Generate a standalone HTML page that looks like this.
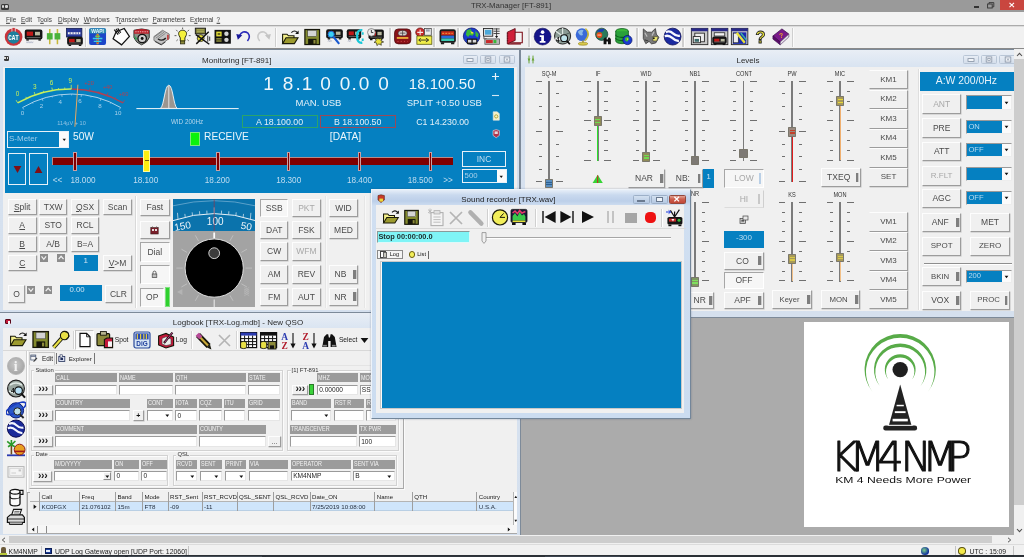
<!DOCTYPE html><html lang="en"><head><meta charset="utf-8"><title>TRX-Manager [FT-891]</title><style>
*{box-sizing:border-box;margin:0;padding:0}
html,body{width:1024px;height:557px;overflow:hidden;background:#ababab}
body{filter:blur(0.5px);position:relative;font-family:"Liberation Sans",sans-serif;font-size:8px;color:#333;line-height:1}
div,svg,i,span.a{position:absolute}
.t{white-space:nowrap;line-height:1}
.b{background:#f0f0f0;border:1px solid;border-color:#fdfdfd #9c9c9c #9c9c9c #fdfdfd;box-shadow:0.6px 0.6px 0 #c9c9c9;display:flex;align-items:center;justify-content:center;white-space:nowrap}
.b.d{background:#f6f6f6;border-color:#a6a6a6 #fff #fff #a6a6a6;box-shadow:none}
.bl{line-height:1}
.ind{position:absolute;right:1.5px;top:50%;width:2.6px;height:9px;margin-top:-4.5px;background:#7e7e7e;box-shadow:0.8px 0 0 #c4c4c4}
.win{background:linear-gradient(#e9eef5 0,#dfe8f3 10px,#d7e2f0 19px,#d5e0ee 100%);border:1px solid #7d8a99}
.wt{white-space:nowrap;color:#2b2b2b;font-size:8px;transform:translate(-50%,-50%)}
.cb{border:1px solid #b9c6d6;background:linear-gradient(#e7edf5,#d4deeb);border-radius:1.5px}
.lab{background:#9b9b9b;color:#f2f2f2;font-size:6.8px;white-space:nowrap;overflow:hidden;padding:1.3px 0 0 1px}
.lab span{display:inline-block;transform:scaleX(0.8);transform-origin:0 50%}
.inp{background:#fff;border:1px solid;border-color:#9a9a9a #e6e6e6 #e6e6e6 #9a9a9a;font-size:6.6px;color:#222;white-space:nowrap;overflow:hidden;padding:1.4px 0 0 1.2px}
.grp{border:1px solid #d2d2d2;box-shadow:0.7px 0.7px 0 #fff, inset 0.7px 0.7px 0 #fff}
.gl{background:#f0f0f0;font-size:5.9px;color:#333;padding:0 1px;white-space:nowrap;transform:translate(0,-50%)}
.blue{background:#0580c1}
.u{text-decoration:underline}
</style></head><body>
<div style="left:0px;top:0px;width:1024px;height:11.8px;background:#9a9a9a"></div>
<div style="left:1px;top:3.5px;width:8px;height:6px;background:#3a3a3a;border-radius:1.5px"></div>
<div style="left:2.2px;top:5px;width:2.2px;height:3px;background:#d8d8d8;border-radius:1px"></div>
<div style="left:5.4px;top:5px;width:2.2px;height:3px;background:#d8d8d8;border-radius:1px"></div>
<div class="t" style="left:511px;top:6.2px;font-size:7.8px;color:#333;transform:translate(-50%,-50%);">TRX-Manager [FT-891]</div>
<div style="left:974px;top:6.4px;width:4.6px;height:1.2px;background:#333"></div>
<svg style="left:987px;top:1.6px;" width="8" height="7" viewBox="0 0 8 7"><rect x="0.6" y="2" width="4.6" height="4" fill="none" stroke="#333" stroke-width="0.9"/><path d="M2 2V0.6H6.8V4.8H5.4" fill="none" stroke="#333" stroke-width="0.9"/></svg>
<div style="left:1000.4px;top:0px;width:23.6px;height:9.6px;background:#c9463f"></div>
<svg style="left:1008.4px;top:1.8px;" width="8" height="6" viewBox="0 0 8 6"><path d="M1.5 0.8L6 5.2M6 0.8L1.5 5.2" stroke="#fff" stroke-width="1.1" fill="none"/></svg>
<div style="left:0px;top:11.8px;width:1024px;height:13.7px;background:#f3f3f3"></div>
<div class="t" style="left:6px;top:19.7px;font-size:6.4px;color:#3a3a3a;transform:translate(0,-50%);"><span class=u>F</span>ile</div>
<div class="t" style="left:21px;top:19.7px;font-size:6.4px;color:#3a3a3a;transform:translate(0,-50%);"><span class=u>E</span>dit</div>
<div class="t" style="left:37px;top:19.7px;font-size:6.4px;color:#3a3a3a;transform:translate(0,-50%);">T<span class=u>o</span>ols</div>
<div class="t" style="left:58px;top:19.7px;font-size:6.4px;color:#3a3a3a;transform:translate(0,-50%);"><span class=u>D</span>isplay</div>
<div class="t" style="left:83.7px;top:19.7px;font-size:6.4px;color:#3a3a3a;transform:translate(0,-50%);"><span class=u>W</span>indows</div>
<div class="t" style="left:115.3px;top:19.7px;font-size:6.4px;color:#3a3a3a;transform:translate(0,-50%);">T<span class=u>r</span>ansceiver</div>
<div class="t" style="left:152.5px;top:19.7px;font-size:6.4px;color:#3a3a3a;transform:translate(0,-50%);"><span class=u>P</span>arameters</div>
<div class="t" style="left:190px;top:19.7px;font-size:6.4px;color:#3a3a3a;transform:translate(0,-50%);">E<span class=u>x</span>ternal</div>
<div class="t" style="left:216.6px;top:19.7px;font-size:6.4px;color:#3a3a3a;transform:translate(0,-50%);"><span class=u>?</span></div>
<div style="left:0px;top:25.5px;width:1024px;height:22.8px;background:#f1f1f1;border-top:0.6px solid #dcdcdc"></div>
<div style="left:0px;top:48px;width:1024px;height:1.4px;background:#8a8a8a"></div>
<div style="left:84.8px;top:28px;width:1.4px;height:18.5px;background:#cfcfcf;box-shadow:1px 0 0 #fbfbfb"></div>
<div style="left:275px;top:28px;width:1.4px;height:18.5px;background:#cfcfcf;box-shadow:1px 0 0 #fbfbfb"></div>
<div style="left:389.3px;top:28px;width:1.4px;height:18.5px;background:#cfcfcf;box-shadow:1px 0 0 #fbfbfb"></div>
<div style="left:433.3px;top:28px;width:1.4px;height:18.5px;background:#cfcfcf;box-shadow:1px 0 0 #fbfbfb"></div>
<div style="left:457.3px;top:28px;width:1.4px;height:18.5px;background:#cfcfcf;box-shadow:1px 0 0 #fbfbfb"></div>
<div style="left:528.3px;top:28px;width:1.4px;height:18.5px;background:#cfcfcf;box-shadow:1px 0 0 #fbfbfb"></div>
<div style="left:636.3px;top:28px;width:1.4px;height:18.5px;background:#cfcfcf;box-shadow:1px 0 0 #fbfbfb"></div>
<div style="left:682.3px;top:28px;width:1.4px;height:18.5px;background:#cfcfcf;box-shadow:1px 0 0 #fbfbfb"></div>
<div style="left:791.8px;top:28px;width:1.4px;height:18.5px;background:#cfcfcf;box-shadow:1px 0 0 #fbfbfb"></div>
<svg style="left:3.7px;top:27.4px;" width="19.2" height="19.2" viewBox="0 0 20 20"><circle cx="10" cy="10.4" r="9.2" fill="#c8343a"/><rect x="8.3" y="0.6" width="3.4" height="5.4" fill="#c8343a" stroke="#f1f1f1" stroke-width="0.8"/><circle cx="10" cy="10.9" r="6.5" fill="#1c7f9c"/><text x="10" y="13.6" font-size="6.6" font-weight="bold" fill="#fff" text-anchor="middle" font-family="Liberation Mono,monospace" textLength="11" lengthAdjust="spacingAndGlyphs">CAT</text></svg>
<svg style="left:24.2px;top:27.4px;" width="19.2" height="19.2" viewBox="0 0 20 20"><rect x="0.8" y="2.6" width="18.4" height="10.4" rx="2" fill="#141414"/><rect x="2.8" y="4.8" width="6.62" height="4.37" fill="#c01818"/><rect x="11.47" y="5" width="5.15" height="3.74" fill="#b9b9a0"/><path d="M2.8 11H17.2" stroke="#777" stroke-width="0.8"/><rect x="2.4" y="12.8" width="2.6" height="1.4" fill="#141414"/><rect x="15" y="12.8" width="2.6" height="1.4" fill="#141414"/><path d="M2.4 16.8l0.8 -1.6l0.8 1.6l0.8 -1.6l0.8 1.6l0.8 -1.6l0.8 1.6l0.8 -1.6l0.8 1.6l0.8 -1.6" fill="none" stroke="#9aa0b8" stroke-width="0.5"/></svg>
<svg style="left:44.4px;top:27.4px;" width="19.2" height="19.2" viewBox="0 0 20 20"><path d="M6 2V18M14 2V18" stroke="#c8b83a" stroke-width="1.6"/><rect x="3" y="6.4" width="6" height="6.6" fill="#4ab23a"/><rect x="11" y="6.4" width="6" height="6.6" fill="#4ab23a"/></svg>
<svg style="left:64.6px;top:27.4px;" width="19.2" height="19.2" viewBox="0 0 20 20"><rect x="1.6" y="1.4" width="16" height="9" fill="#2a3a9a" stroke="#10184a" stroke-width="0.8"/><rect x="3" y="5.4" width="13" height="2.2" fill="#f1f1f1"/><path d="M5.4 5.4V7.6M8.4 5.4V7.6M11.4 5.4V7.6M14 5.4V7.6" stroke="#2a3a9a" stroke-width="0.8"/><rect x="2.2" y="10.2" width="16.4" height="8.4" rx="2" fill="#141414"/><rect x="4.2" y="12.4" width="5.9" height="3.53" fill="#c01818"/><rect x="11.71" y="12.6" width="4.59" height="3.02" fill="#b9b9a0"/><path d="M4.2 16.6H16.6" stroke="#777" stroke-width="0.8"/><rect x="3.8" y="18.4" width="2.6" height="1.4" fill="#141414"/><rect x="14.4" y="18.4" width="2.6" height="1.4" fill="#141414"/></svg>
<svg style="left:88.2px;top:27.4px;" width="19.2" height="19.2" viewBox="0 0 20 20"><rect x="1.2" y="1.2" width="17.6" height="17.6" rx="2" fill="#1c46c8"/><rect x="1.2" y="1.2" width="17.6" height="5.6" rx="2" fill="#2a8ab0"/><text x="10" y="6.4" font-size="5.2" font-weight="bold" fill="#eaf6ff" text-anchor="middle" font-family="Liberation Sans,sans-serif">WAPI</text><path d="M10 7V18" stroke="#e8a020" stroke-width="2.2"/><path d="M10 8V17" stroke="#d03020" stroke-width="0.9"/><path d="M5 12H15M6 15H14" stroke="#3ad0e0" stroke-width="1.4"/><path d="M7.4 9.6H12.6" stroke="#6ae04a" stroke-width="1.2"/></svg>
<svg style="left:111.4px;top:27.4px;" width="19.2" height="19.2" viewBox="0 0 20 20"><path d="M5.4 5L13.8 1.6L19.2 9.8L11 18.6L2.2 12.2Z" fill="#fdfdfd" stroke="#111" stroke-width="1.3"/><path d="M3.4 2.8L7.4 8M5.2 2L8.8 7M7 1.4L10.2 6" stroke="#111" stroke-width="1.2"/></svg>
<svg style="left:132px;top:27.4px;" width="19.2" height="19.2" viewBox="0 0 20 20"><path d="M2 3.4Q10 0.6 18 3.4V11Q16 16.6 10 18.6Q4 16.6 2 11Z" fill="#8a9088" stroke="#222" stroke-width="0.9"/><path d="M2.2 3.6Q10 0.8 17.8 3.6V7H2.2Z" fill="#b8202a"/><path d="M3.4 5H16.6" stroke="#f4d0d0" stroke-width="0.9" stroke-dasharray="1.4 1"/><path d="M2.4 8.6L6 12.6L3.4 13.6Z" fill="#3aa05a"/><circle cx="10.6" cy="12" r="4.4" fill="#cfcfcf" stroke="#111" stroke-width="1.3"/><circle cx="10.6" cy="12" r="1.5" fill="#111"/></svg>
<svg style="left:152.4px;top:27.4px;" width="19.2" height="19.2" viewBox="0 0 20 20"><path d="M2 10L11 3.4L18 7.4V12L9.6 18L2 14Z" fill="#c4c4c4" stroke="#555" stroke-width="0.7"/><path d="M2.4 10.4L11 4.4M4 11.6L12.6 5.4M5.6 12.6L14 6.6" stroke="#777" stroke-width="0.8"/><path d="M6.4 12.4Q10 15.4 14.4 11.6" fill="none" stroke="#222" stroke-width="1.4"/><path d="M16.6 8V13.4" stroke="#c03030" stroke-width="1.6"/><path d="M3 15L9.6 18.6L14 15.6" fill="none" stroke="#333" stroke-width="1"/></svg>
<svg style="left:173.1px;top:27.4px;" width="19.2" height="19.2" viewBox="0 0 20 20"><path d="M10 3.4C13.6 3.4 15 6.4 13.6 9L12.4 11.4V14.6H7.6V11.4L6.4 9C5 6.4 6.4 3.4 10 3.4Z" fill="#f4f03a" stroke="#2a2a10" stroke-width="1"/><rect x="7.8" y="14.6" width="4.4" height="3" fill="#8c8a3a" stroke="#2a2a10" stroke-width="0.8"/><path d="M10 0.6V2.2M3.4 3L4.8 4.6M16.6 3L15.2 4.6M1.6 9H3.6M16.4 9H18.4M3.6 14.4L5 13.2M16.4 14.4L15 13.2" stroke="#333" stroke-width="0.8"/></svg>
<svg style="left:192.9px;top:27.4px;" width="19.2" height="19.2" viewBox="0 0 20 20"><rect x="2.4" y="1.2" width="10.6" height="6" fill="#7a7a3a" stroke="#111" stroke-width="0.9"/><path d="M4 3H11.4M4 5H11.4" stroke="#d8d870" stroke-width="0.7"/><circle cx="8" cy="11.6" r="3.6" fill="#e8e03a" stroke="#222" stroke-width="0.8"/><path d="M3 8L17 18M3.4 17.6L16.4 5" stroke="#111" stroke-width="1.5"/><path d="M15.4 9V15.4M17.4 10V14.4" stroke="#111" stroke-width="0.9"/></svg>
<svg style="left:213.4px;top:27.4px;" width="19.2" height="19.2" viewBox="0 0 20 20"><rect x="1.6" y="3" width="17" height="14.4" fill="#111"/><rect x="3.4" y="4.8" width="5.6" height="5" fill="#e8e03a"/><rect x="4.8" y="6.2" width="2.8" height="2.2" fill="#6a6a1a"/><path d="M3.4 12.4H9M3.4 14.6H9" stroke="#d8d850" stroke-width="1"/><circle cx="14" cy="7" r="2.3" fill="#d4d4d4"/><circle cx="14" cy="13.4" r="2.3" fill="#d4d4d4"/></svg>
<svg style="left:233.9px;top:27.4px;" width="19.2" height="19.2" viewBox="0 0 20 20"><path d="M5.4 9.6Q9 2.6 14.6 6.4Q17.6 10 14 14.6" fill="none" stroke="#2a2ab8" stroke-width="1.6"/><path d="M2.4 7.4L8.6 8.6L4 13.4Z" fill="#1a1a9a"/></svg>
<svg style="left:253.8px;top:27.4px;" width="19.2" height="19.2" viewBox="0 0 20 20"><path d="M14.6 9.6Q11 2.6 5.4 6.4Q2.4 10 6 14.6" fill="none" stroke="#c9c9c9" stroke-width="1.6"/><path d="M17.6 7.4L11.4 8.6L16 13.4Z" fill="#c4c4c4"/></svg>
<svg style="left:281px;top:27.6px;" width="19" height="19" viewBox="0 0 19 19"><path d="M1.6 15.6V6.2H6L7.4 7.8H13V10" fill="#f2ee8a" stroke="#1a1a0a" stroke-width="1.1"/><path d="M1.6 15.6L5 9.8H17L13.4 15.6Z" fill="#9c9a2e" stroke="#1a1a0a" stroke-width="1.1"/><path d="M10.4 4.6Q13.6 1.4 16.4 4.6" fill="none" stroke="#111" stroke-width="1.1"/><path d="M17.6 2.6V6H14.2Z" fill="#111"/></svg>
<svg style="left:302.7px;top:28.4px;" width="18.05" height="18.05" viewBox="0 0 19 19"><rect x="2" y="1.6" width="15.4" height="15.8" fill="#838a2e" stroke="#16160a" stroke-width="1.3"/><rect x="5" y="2.4" width="9.4" height="6.4" fill="#d4d4d4" stroke="#333" stroke-width="0.5"/><rect x="5.4" y="11.4" width="8.8" height="6" fill="#16160a"/><rect x="11" y="12.6" width="2.2" height="3.8" fill="#8c8a3a"/></svg>
<svg style="left:325.4px;top:27.4px;" width="19.2" height="19.2" viewBox="0 0 20 20"><rect x="1.2" y="2.4" width="17.4" height="9.4" rx="2" fill="#141414"/><rect x="3.2" y="4.6" width="6.26" height="3.95" fill="#c01818"/><rect x="11.29" y="4.8" width="4.87" height="3.38" fill="#b9b9a0"/><path d="M3.2 9.8H16.6" stroke="#777" stroke-width="0.8"/><rect x="2.8" y="11.6" width="2.6" height="1.4" fill="#141414"/><rect x="14.4" y="11.6" width="2.6" height="1.4" fill="#141414"/><path d="M3 15.4l0.8 -1.6l0.8 1.6l0.8 -1.6l0.8 1.6l0.8 -1.6" fill="none" stroke="#9aa0b8" stroke-width="0.5"/><circle cx="6.4" cy="7.6" r="3.2" fill="#3ad0f4" stroke="#1a6ad0" stroke-width="1"/><path d="M8.8 10.2L14.8 17.6" stroke="#1a5ad0" stroke-width="2.2"/></svg>
<svg style="left:345.9px;top:27.4px;" width="19.2" height="19.2" viewBox="0 0 20 20"><rect x="0.8" y="2.4" width="15" height="9.4" rx="2" fill="#141414"/><rect x="2.8" y="4.6" width="5.4" height="3.95" fill="#c01818"/><rect x="9.5" y="4.8" width="4.2" height="3.38" fill="#b9b9a0"/><path d="M2.8 9.8H13.8" stroke="#777" stroke-width="0.8"/><rect x="2.4" y="11.6" width="2.6" height="1.4" fill="#141414"/><rect x="11.6" y="11.6" width="2.6" height="1.4" fill="#141414"/><path d="M2 15.4l0.8 -1.6l0.8 1.6l0.8 -1.6l0.8 1.6" fill="none" stroke="#9aa0b8" stroke-width="0.5"/><path d="M17 3.4Q11.4 2.6 11.6 9.4Q11.4 17 17 16.4" fill="none" stroke="#18c8d8" stroke-width="2.4"/><path d="M17.4 5.6V8M17.4 12V14.6" stroke="#18c8d8" stroke-width="2"/></svg>
<svg style="left:366.4px;top:27.4px;" width="19.2" height="19.2" viewBox="0 0 20 20"><rect x="2.6" y="2.6" width="16" height="10" rx="2" fill="#141414"/><rect x="4.6" y="4.8" width="5.76" height="4.2" fill="#c01818"/><rect x="11.88" y="5" width="4.48" height="3.6" fill="#b9b9a0"/><path d="M4.6 10.6H16.6" stroke="#777" stroke-width="0.8"/><rect x="4.2" y="12.4" width="2.6" height="1.4" fill="#141414"/><rect x="14.4" y="12.4" width="2.6" height="1.4" fill="#141414"/><circle cx="5.6" cy="5.6" r="4" fill="#ececec" stroke="#777" stroke-width="0.8"/><path d="M5.6 3V5.8H7.6" fill="none" stroke="#222" stroke-width="0.9"/><path d="M12 10L13.4 12.6L16.4 11.4L15.6 14.4L18.4 15.6L15.6 16.6L16 19L13.4 17.6L11.4 19.4L11 16.6L8.4 16L10.6 14.4L9.4 11.8L11.8 12.6Z" fill="#e8e03a" stroke="#222" stroke-width="0.7"/></svg>
<svg style="left:393.4px;top:27.4px;" width="19.2" height="19.2" viewBox="0 0 20 20"><rect x="1.6" y="2" width="17" height="15.6" rx="4" fill="#8a1218" stroke="#4a080c" stroke-width="0.8"/><ellipse cx="10" cy="6.4" rx="4.6" ry="2.8" fill="#d8d0d0" stroke="#333" stroke-width="0.6"/><path d="M10 3.6V9.2M7 6.4H13" stroke="#333" stroke-width="0.7"/><rect x="4" y="10.4" width="12" height="2" fill="#e8a838"/><path d="M4.6 15H15.4" stroke="#c84a4a" stroke-width="1" stroke-dasharray="1.2 2.2"/></svg>
<svg style="left:413.9px;top:27.4px;" width="19.2" height="19.2" viewBox="0 0 20 20"><circle cx="6.4" cy="5.6" r="4.6" fill="#c82a2a" stroke="#5a0a0a" stroke-width="0.7"/><path d="M3.4 5.6H9.4M6.4 2.6V8.6" stroke="#f4e8e8" stroke-width="1.1"/><rect x="11" y="1.6" width="7" height="7" fill="#ececec" stroke="#444" stroke-width="0.8"/><rect x="12.4" y="2.4" width="4" height="2.4" fill="#9aa0b0"/><rect x="3" y="9.4" width="15.6" height="8.6" fill="#f0ee4a" stroke="#55550a" stroke-width="0.8"/><path d="M5 13.6H14.6M12.4 11.6L15.4 13.6L12.4 15.6M7 11.6L5 13.6L7 15.6" fill="none" stroke="#222" stroke-width="0.9"/></svg>
<svg style="left:437.6px;top:27.4px;" width="19.2" height="19.2" viewBox="0 0 20 20"><rect x="1.6" y="2.4" width="17" height="14" rx="2.4" fill="#1c1c1c"/><rect x="3.4" y="4.4" width="13.4" height="4.4" fill="#c82a1a"/><path d="M4.4 6.6H15.4" stroke="#f0a040" stroke-width="1" stroke-dasharray="2 1.2"/><rect x="3.4" y="9" width="13.4" height="3" fill="#2a6ad8"/><rect x="3.4" y="12" width="13.4" height="2.6" fill="#3ac8b0"/><rect x="3" y="16" width="3.4" height="2" fill="#1c1c1c"/><rect x="13.6" y="16" width="3.4" height="2" fill="#1c1c1c"/></svg>
<svg style="left:461.8px;top:27.4px;" width="19.2" height="19.2" viewBox="0 0 20 20"><circle cx="10" cy="9.6" r="8.6" fill="#1a3ad0" stroke="#0a1460" stroke-width="0.8"/><path d="M5 3.4L9 2L10.4 5L13 6.4L11 9L8 8.4L6.4 10.4L4 8Z" fill="#3ab83a"/><path d="M8.6 4.4L12 5.6L10.4 7.6Z" fill="#e8e03a"/><path d="M14 4L17.4 7.4L16.4 11L14 9Z" fill="#3ab83a"/><rect x="5" y="12" width="11" height="6" rx="1" fill="#1a1a1a"/><rect x="6.2" y="13.4" width="3.6" height="2.8" fill="#d8d8d8"/><rect x="11.2" y="13.4" width="3.6" height="2.8" fill="#d8d8d8"/></svg>
<svg style="left:481.6px;top:27.4px;" width="19.2" height="19.2" viewBox="0 0 20 20"><rect x="1.6" y="1.6" width="9.6" height="8" fill="#e4e4e4" stroke="#222" stroke-width="0.9"/><rect x="3" y="3" width="6.8" height="5" fill="#4aa8d8"/><path d="M12 2H18.4M12 4.4H18.4M12 6.8H18.4M15.2 1.4V10.4" stroke="#333" stroke-width="0.9"/><path d="M13.6 9.4H16.8L15.2 11.6Z" fill="#111"/><path d="M2 10.4V12.4H5" fill="none" stroke="#333" stroke-width="0.8"/><rect x="3" y="12.4" width="15.4" height="5.6" fill="#b8b8b8" stroke="#444" stroke-width="0.7"/><rect x="4.2" y="13.6" width="7" height="3.2" fill="#c82a2a"/><rect x="12" y="13.6" width="3" height="3.2" fill="#3ab83a"/></svg>
<svg style="left:504.9px;top:27.4px;" width="19.2" height="19.2" viewBox="0 0 20 20"><path d="M9 5.4H18V16.4H6.4" fill="#f4f4f4" stroke="#7a0a14" stroke-width="1.1"/><path d="M2.4 5.4L10.6 1.6V14L2.4 17.6Z" fill="#d0203a" stroke="#5a0a14" stroke-width="0.9"/><path d="M2 7H3.4M2 9.4H3.4M2 11.8H3.4M2 14.2H3.4" stroke="#5a0a14" stroke-width="0.8"/><path d="M3 17.6H16.6" stroke="#7a0a14" stroke-width="1.4"/></svg>
<svg style="left:533px;top:27.4px;" width="19.2" height="19.2" viewBox="0 0 20 20"><circle cx="10" cy="10" r="8.8" fill="#14148a" stroke="#0a0a50" stroke-width="0.6"/><circle cx="10" cy="5.4" r="1.9" fill="#fff"/><path d="M7 8.6H11.4V14.6H13V16.4H7V14.6H8.6V10.4H7Z" fill="#fff"/></svg>
<svg style="left:553.2px;top:27.4px;" width="19.2" height="19.2" viewBox="0 0 20 20"><circle cx="10" cy="9.4" r="8.4" fill="#8a9a94" stroke="#222" stroke-width="1"/><path d="M10 1V9.4L3 4.4" fill="none" stroke="#dfe8e4" stroke-width="1.2"/><path d="M10 9.4L17.4 6" stroke="#4a5a54" stroke-width="1"/><path d="M2.4 12.6H8" stroke="#f4f4f4" stroke-width="3"/><text x="3" y="15.4" font-size="6.6" font-weight="bold" fill="#111" font-family="Liberation Sans,sans-serif">4</text><circle cx="11.6" cy="11.6" r="3.6" fill="#bfe4ec" stroke="#111" stroke-width="1.1"/><path d="M14.4 14.4L17.6 18" stroke="#111" stroke-width="1.8"/></svg>
<svg style="left:573.1px;top:27.4px;" width="19.2" height="19.2" viewBox="0 0 20 20"><circle cx="9.4" cy="8" r="6.6" fill="#3a6ad8"/><path d="M5 5Q8 2 11 3.4Q9 6 10.4 8.4Q7 10 5 5Z" fill="#8ab8e8"/><path d="M13 1.6Q19 7 12.4 14.4" fill="none" stroke="#c8b83a" stroke-width="1.6"/><path d="M10.4 14V16.6" stroke="#a8983a" stroke-width="1.6"/><ellipse cx="10.4" cy="17.4" rx="5" ry="1.6" fill="#d8c84a" stroke="#8a7a1a" stroke-width="0.6"/></svg>
<svg style="left:594.3px;top:27.4px;" width="19.2" height="19.2" viewBox="0 0 20 20"><circle cx="8" cy="7.6" r="6.4" fill="#2a7a5a" stroke="#133" stroke-width="0.7"/><path d="M3 4.4Q6.4 1 11 2.4L9 5H4.4Z" fill="#1a3ab8"/><circle cx="5.6" cy="8.4" r="3" fill="#e84a1a"/><path d="M3.6 8.4H7.6" stroke="#f4c8a8" stroke-width="1.1"/><path d="M10 18V12.4L11.4 11H12.6L13.4 13H14.2L15 11H16.2L17.6 12.4V18H14.6V15H13V18Z" fill="#111"/></svg>
<svg style="left:614.1px;top:27.4px;" width="19.2" height="19.2" viewBox="0 0 20 20"><ellipse cx="8.4" cy="4.4" rx="6.6" ry="2.8" fill="#3ab83a" stroke="#0a5a1a" stroke-width="0.8"/><path d="M1.8 4.4V14.6A6.6 2.8 0 0 0 15 14.6V4.4" fill="#2aa03a" stroke="#0a5a1a" stroke-width="0.8"/><path d="M1.8 8A6.6 2.8 0 0 0 15 8M1.8 11.4A6.6 2.8 0 0 0 15 11.4" fill="none" stroke="#0a5a1a" stroke-width="1.2"/><circle cx="14" cy="13.6" r="4.8" fill="#1a3ad0" stroke="#0a1460" stroke-width="0.7"/><path d="M11.4 11.4L14.4 10L16 12.4L13.6 15.4L11.6 14Z" fill="#3ab83a"/><path d="M13.4 11.4L15 12.4L13.6 14Z" fill="#e8e03a"/></svg>
<svg style="left:641.4px;top:27.4px;" width="19.2" height="19.2" viewBox="0 0 20 20"><path d="M2.4 2L6.4 5.4H11L15 1.6L16 7.4L18.6 11L15.4 16.6L11 17.6L8.4 15L5 17.4L2.4 12Z" fill="#7a7a7a" stroke="#333" stroke-width="0.8"/><path d="M4 6L6.4 10M13.6 5L11.4 9" stroke="#bdbdbd" stroke-width="1.2"/><path d="M12.4 10H18L16.4 14.6H12.4Z" fill="#e8e470" stroke="#333" stroke-width="0.6"/><circle cx="13.4" cy="11.6" r="0.9" fill="#111"/><path d="M4 13.4L7.6 14.6" stroke="#333" stroke-width="1"/></svg>
<svg style="left:662.7px;top:27.4px;" width="19.2" height="19.2" viewBox="0 0 20 20"><circle cx="10" cy="10" r="8.8" fill="#1a2aa0" stroke="#0a0a50" stroke-width="0.8"/><path d="M3 5.4Q7 3.4 10.4 6.6T17.6 9M1.8 9.6Q6 8 9.6 11.4T16.6 14.6" stroke="#f6f8ff" stroke-width="2.4" fill="none"/></svg>
<svg style="left:690.1px;top:27.4px;" width="19.2" height="19.2" viewBox="0 0 20 20"><rect x="1.4" y="1.4" width="17.2" height="17" fill="#c9c9c9" stroke="#222" stroke-width="0.9"/><rect x="1.4" y="1.4" width="17.2" height="3" fill="#2a2a8a"/><rect x="5" y="6.4" width="10" height="9" fill="#ececec" stroke="#222" stroke-width="0.9"/><rect x="3.4" y="10" width="7.6" height="6.4" fill="#f4f4f4" stroke="#222" stroke-width="0.9"/><rect x="4.8" y="12.4" width="4.6" height="3" fill="#3a6a6a"/></svg>
<svg style="left:709.9px;top:27.4px;" width="19.2" height="19.2" viewBox="0 0 20 20"><rect x="1.4" y="1.4" width="17.2" height="17" fill="#c9c9c9" stroke="#222" stroke-width="0.9"/><rect x="1.4" y="1.4" width="17.2" height="3" fill="#2a2a8a"/><rect x="4.4" y="6" width="11" height="3.4" fill="#f4f4f4" stroke="#222" stroke-width="0.8"/><rect x="2.4" y="10" width="15" height="7.6" rx="2" fill="#141414"/><rect x="4.4" y="12.2" width="5.4" height="3.19" fill="#c01818"/><rect x="11.1" y="12.4" width="4.2" height="2.74" fill="#b9b9a0"/><path d="M4.4 15.6H15.4" stroke="#777" stroke-width="0.8"/><rect x="4" y="17.4" width="2.6" height="1.4" fill="#141414"/><rect x="13.2" y="17.4" width="2.6" height="1.4" fill="#141414"/></svg>
<svg style="left:730.4px;top:27.4px;" width="19.2" height="19.2" viewBox="0 0 20 20"><rect x="1.4" y="1.4" width="17.2" height="17" fill="#c9c9c9" stroke="#222" stroke-width="0.9"/><rect x="1.4" y="1.4" width="17.2" height="3" fill="#2a2a8a"/><rect x="3" y="5.6" width="14" height="12" fill="#1a2ab0"/><rect x="3.6" y="6.4" width="5" height="10" fill="#ececec" stroke="#222" stroke-width="0.6"/><path d="M7 6L15.4 16.4" stroke="#e8e03a" stroke-width="2.4"/><path d="M11.4 6.4L17 13.4" stroke="#3ab8a0" stroke-width="1.6"/></svg>
<svg style="left:750.9px;top:27.4px;" width="19.2" height="19.2" viewBox="0 0 20 20"><text x="10" y="17" font-size="17" font-weight="bold" fill="#e8e03a" stroke="#222" stroke-width="0.9" text-anchor="middle" font-family="Liberation Sans,sans-serif">?</text></svg>
<svg style="left:771.4px;top:27.4px;" width="19.2" height="19.2" viewBox="0 0 20 20"><path d="M2 9.4L11.4 2L18.6 7.4L9.6 15.6Z" fill="#7a1a8a" stroke="#3a0a4a" stroke-width="0.8"/><path d="M2 9.4V12.6L9.6 18.6V15.6Z" fill="#5a0a6a" stroke="#3a0a4a" stroke-width="0.7"/><path d="M9.6 15.6L18.6 7.4V10.4L9.6 18.6Z" fill="#e8e4ec" stroke="#5a3a6a" stroke-width="0.7"/><text x="10.6" y="11.4" font-size="7" font-weight="bold" fill="#e8a030" text-anchor="middle" font-family="Liberation Sans,sans-serif" transform="rotate(-12 10.6 9)">?</text></svg>
<div class="win" style="left:520.4px;top:49.4px;width:509.6px;height:268.2px;"></div>
<svg style="left:526.5px;top:54.5px;" width="8" height="9" viewBox="0 0 8 9"><path d="M2 0.6V8.4M6 0.6V8.4" stroke="#6aa336" stroke-width="1"/><path d="M0.6 3.6H3.4L2 6.6ZM4.6 5.4H7.4L6 2.4Z" fill="#6aa336"/></svg>
<div class="wt" style="left:748px;top:60.5px">Levels</div>
<div class="cb" style="left:962.6px;top:54.6px;width:16.2px;height:9.6px;"></div>
<svg style="left:966.7px;top:56.4px;" width="8" height="6" viewBox="0 0 8 6"><rect x="1" y="2.6" width="6" height="2.8" fill="#f2f5f9" stroke="#8592a3" stroke-width="0.8"/></svg>
<div class="cb" style="left:981px;top:54.6px;width:16px;height:9.6px;"></div>
<svg style="left:985px;top:55.9px;" width="8" height="7" viewBox="0 0 8 7"><rect x="1.2" y="0.9" width="5.6" height="5.2" fill="#f2f5f9" stroke="#8592a3" stroke-width="0.8"/><rect x="2.8" y="2.6" width="2.4" height="2" fill="none" stroke="#8592a3" stroke-width="0.7"/></svg>
<div class="cb" style="left:999.4px;top:54.6px;width:16.6px;height:9.6px;"></div>
<svg style="left:1003.7px;top:55.9px;" width="8" height="7" viewBox="0 0 8 7"><rect x="1.2" y="0.9" width="5.6" height="5.2" fill="#f2f5f9" stroke="#8592a3" stroke-width="0.8"/><path d="M2.6 2.2L5.4 4.8M5.4 2.2L2.6 4.8" stroke="#8592a3" stroke-width="0.7"/></svg>
<div style="left:525.4px;top:66.8px;width:504.6px;height:243.8px;background:#f0f0f0"></div>
<div class="t" style="left:549px;top:73.7px;font-size:6.4px;color:#333;transform:translate(-50%,-50%);transform:translate(-50%,-50%) scaleX(0.88);">SQ-M</div>
<div style="left:548.1px;top:81.4px;width:1.8px;height:101.08px;background:#7b7b7b"></div>
<div style="left:535.6px;top:80.9px;width:6.4px;height:1px;background:#6f6f6f"></div>
<div style="left:555.6px;top:80.9px;width:7px;height:1px;background:#6f6f6f"></div>
<div style="left:538.8px;top:93.46px;width:3.2px;height:1px;background:#6f6f6f"></div>
<div style="left:555.6px;top:93.46px;width:3.2px;height:1px;background:#6f6f6f"></div>
<div style="left:538.8px;top:106.02px;width:3.2px;height:1px;background:#6f6f6f"></div>
<div style="left:555.6px;top:106.02px;width:3.2px;height:1px;background:#6f6f6f"></div>
<div style="left:538.8px;top:118.58px;width:3.2px;height:1px;background:#6f6f6f"></div>
<div style="left:555.6px;top:118.58px;width:3.2px;height:1px;background:#6f6f6f"></div>
<div style="left:535.6px;top:131.14px;width:6.4px;height:1px;background:#6f6f6f"></div>
<div style="left:555.6px;top:131.14px;width:7px;height:1px;background:#6f6f6f"></div>
<div style="left:538.8px;top:143.7px;width:3.2px;height:1px;background:#6f6f6f"></div>
<div style="left:555.6px;top:143.7px;width:3.2px;height:1px;background:#6f6f6f"></div>
<div style="left:538.8px;top:156.26px;width:3.2px;height:1px;background:#6f6f6f"></div>
<div style="left:555.6px;top:156.26px;width:3.2px;height:1px;background:#6f6f6f"></div>
<div style="left:538.8px;top:168.82px;width:3.2px;height:1px;background:#6f6f6f"></div>
<div style="left:555.6px;top:168.82px;width:3.2px;height:1px;background:#6f6f6f"></div>
<div style="left:535.6px;top:181.38px;width:6.4px;height:1px;background:#6f6f6f"></div>
<div style="left:555.6px;top:181.38px;width:7px;height:1px;background:#6f6f6f"></div>
<div style="left:544.8px;top:178.6px;width:8.4px;height:9.6px;background:#5a8fc0;border:1px solid #7a776c;border-radius:0.8px"></div>
<div style="left:546.4px;top:181.5px;width:5.2px;height:1.4px;background:#2b5f92"></div>
<div style="left:546.4px;top:183.9px;width:5.2px;height:1.4px;background:#2b5f92"></div>
<div class="t" style="left:597.8px;top:73.7px;font-size:6.4px;color:#333;transform:translate(-50%,-50%);transform:translate(-50%,-50%) scaleX(0.88);">IF</div>
<div style="left:596.9px;top:81.4px;width:1.8px;height:79.24px;background:#7b7b7b"></div>
<div style="left:597.1px;top:121px;width:1.4px;height:39.6px;background:#2be02b"></div>
<div style="left:584.4px;top:80.9px;width:6.4px;height:1px;background:#6f6f6f"></div>
<div style="left:604.4px;top:80.9px;width:7px;height:1px;background:#6f6f6f"></div>
<div style="left:587.6px;top:90.73px;width:3.2px;height:1px;background:#6f6f6f"></div>
<div style="left:604.4px;top:90.73px;width:3.2px;height:1px;background:#6f6f6f"></div>
<div style="left:587.6px;top:100.56px;width:3.2px;height:1px;background:#6f6f6f"></div>
<div style="left:604.4px;top:100.56px;width:3.2px;height:1px;background:#6f6f6f"></div>
<div style="left:587.6px;top:110.39px;width:3.2px;height:1px;background:#6f6f6f"></div>
<div style="left:604.4px;top:110.39px;width:3.2px;height:1px;background:#6f6f6f"></div>
<div style="left:584.4px;top:120.22px;width:6.4px;height:1px;background:#6f6f6f"></div>
<div style="left:604.4px;top:120.22px;width:7px;height:1px;background:#6f6f6f"></div>
<div style="left:587.6px;top:130.05px;width:3.2px;height:1px;background:#6f6f6f"></div>
<div style="left:604.4px;top:130.05px;width:3.2px;height:1px;background:#6f6f6f"></div>
<div style="left:587.6px;top:139.88px;width:3.2px;height:1px;background:#6f6f6f"></div>
<div style="left:604.4px;top:139.88px;width:3.2px;height:1px;background:#6f6f6f"></div>
<div style="left:587.6px;top:149.71px;width:3.2px;height:1px;background:#6f6f6f"></div>
<div style="left:604.4px;top:149.71px;width:3.2px;height:1px;background:#6f6f6f"></div>
<div style="left:584.4px;top:159.54px;width:6.4px;height:1px;background:#6f6f6f"></div>
<div style="left:604.4px;top:159.54px;width:7px;height:1px;background:#6f6f6f"></div>
<div style="left:593.6px;top:116.2px;width:8.4px;height:9.6px;background:#8f8a58;border:1px solid #7a776c;border-radius:0.8px"></div>
<div style="left:595.2px;top:119.1px;width:5.2px;height:1.4px;background:#6fdc4f"></div>
<div style="left:595.2px;top:121.5px;width:5.2px;height:1.4px;background:#6fdc4f"></div>
<div class="t" style="left:646.3px;top:73.7px;font-size:6.4px;color:#333;transform:translate(-50%,-50%);transform:translate(-50%,-50%) scaleX(0.88);">WID</div>
<div style="left:645.4px;top:81.4px;width:1.8px;height:79.24px;background:#7b7b7b"></div>
<div style="left:632.9px;top:80.9px;width:6.4px;height:1px;background:#6f6f6f"></div>
<div style="left:652.9px;top:80.9px;width:7px;height:1px;background:#6f6f6f"></div>
<div style="left:636.1px;top:90.73px;width:3.2px;height:1px;background:#6f6f6f"></div>
<div style="left:652.9px;top:90.73px;width:3.2px;height:1px;background:#6f6f6f"></div>
<div style="left:636.1px;top:100.56px;width:3.2px;height:1px;background:#6f6f6f"></div>
<div style="left:652.9px;top:100.56px;width:3.2px;height:1px;background:#6f6f6f"></div>
<div style="left:636.1px;top:110.39px;width:3.2px;height:1px;background:#6f6f6f"></div>
<div style="left:652.9px;top:110.39px;width:3.2px;height:1px;background:#6f6f6f"></div>
<div style="left:632.9px;top:120.22px;width:6.4px;height:1px;background:#6f6f6f"></div>
<div style="left:652.9px;top:120.22px;width:7px;height:1px;background:#6f6f6f"></div>
<div style="left:636.1px;top:130.05px;width:3.2px;height:1px;background:#6f6f6f"></div>
<div style="left:652.9px;top:130.05px;width:3.2px;height:1px;background:#6f6f6f"></div>
<div style="left:636.1px;top:139.88px;width:3.2px;height:1px;background:#6f6f6f"></div>
<div style="left:652.9px;top:139.88px;width:3.2px;height:1px;background:#6f6f6f"></div>
<div style="left:636.1px;top:149.71px;width:3.2px;height:1px;background:#6f6f6f"></div>
<div style="left:652.9px;top:149.71px;width:3.2px;height:1px;background:#6f6f6f"></div>
<div style="left:632.9px;top:159.54px;width:6.4px;height:1px;background:#6f6f6f"></div>
<div style="left:652.9px;top:159.54px;width:7px;height:1px;background:#6f6f6f"></div>
<div style="left:642.1px;top:152px;width:8.4px;height:9.6px;background:#8f8a58;border:1px solid #7a776c;border-radius:0.8px"></div>
<div style="left:643.7px;top:154.9px;width:5.2px;height:1.4px;background:#6fdc4f"></div>
<div style="left:643.7px;top:157.3px;width:5.2px;height:1.4px;background:#6fdc4f"></div>
<div class="t" style="left:695px;top:73.7px;font-size:6.4px;color:#333;transform:translate(-50%,-50%);transform:translate(-50%,-50%) scaleX(0.88);">NB1</div>
<div style="left:694.1px;top:81.4px;width:1.8px;height:79.24px;background:#7b7b7b"></div>
<div style="left:681.6px;top:80.9px;width:6.4px;height:1px;background:#6f6f6f"></div>
<div style="left:701.6px;top:80.9px;width:7px;height:1px;background:#6f6f6f"></div>
<div style="left:684.8px;top:90.73px;width:3.2px;height:1px;background:#6f6f6f"></div>
<div style="left:701.6px;top:90.73px;width:3.2px;height:1px;background:#6f6f6f"></div>
<div style="left:684.8px;top:100.56px;width:3.2px;height:1px;background:#6f6f6f"></div>
<div style="left:701.6px;top:100.56px;width:3.2px;height:1px;background:#6f6f6f"></div>
<div style="left:684.8px;top:110.39px;width:3.2px;height:1px;background:#6f6f6f"></div>
<div style="left:701.6px;top:110.39px;width:3.2px;height:1px;background:#6f6f6f"></div>
<div style="left:681.6px;top:120.22px;width:6.4px;height:1px;background:#6f6f6f"></div>
<div style="left:701.6px;top:120.22px;width:7px;height:1px;background:#6f6f6f"></div>
<div style="left:684.8px;top:130.05px;width:3.2px;height:1px;background:#6f6f6f"></div>
<div style="left:701.6px;top:130.05px;width:3.2px;height:1px;background:#6f6f6f"></div>
<div style="left:684.8px;top:139.88px;width:3.2px;height:1px;background:#6f6f6f"></div>
<div style="left:701.6px;top:139.88px;width:3.2px;height:1px;background:#6f6f6f"></div>
<div style="left:684.8px;top:149.71px;width:3.2px;height:1px;background:#6f6f6f"></div>
<div style="left:701.6px;top:149.71px;width:3.2px;height:1px;background:#6f6f6f"></div>
<div style="left:681.6px;top:159.54px;width:6.4px;height:1px;background:#6f6f6f"></div>
<div style="left:701.6px;top:159.54px;width:7px;height:1px;background:#6f6f6f"></div>
<div style="left:690.8px;top:155.8px;width:8.4px;height:9.6px;background:#7d7974;border:1px solid #7a776c;border-radius:0.8px"></div>
<div class="t" style="left:743.5px;top:73.7px;font-size:6.4px;color:#333;transform:translate(-50%,-50%);transform:translate(-50%,-50%) scaleX(0.88);">CONT</div>
<div style="left:742.6px;top:81.4px;width:1.8px;height:79.24px;background:#7b7b7b"></div>
<div style="left:730.1px;top:80.9px;width:6.4px;height:1px;background:#6f6f6f"></div>
<div style="left:750.1px;top:80.9px;width:7px;height:1px;background:#6f6f6f"></div>
<div style="left:733.3px;top:90.73px;width:3.2px;height:1px;background:#6f6f6f"></div>
<div style="left:750.1px;top:90.73px;width:3.2px;height:1px;background:#6f6f6f"></div>
<div style="left:733.3px;top:100.56px;width:3.2px;height:1px;background:#6f6f6f"></div>
<div style="left:750.1px;top:100.56px;width:3.2px;height:1px;background:#6f6f6f"></div>
<div style="left:733.3px;top:110.39px;width:3.2px;height:1px;background:#6f6f6f"></div>
<div style="left:750.1px;top:110.39px;width:3.2px;height:1px;background:#6f6f6f"></div>
<div style="left:730.1px;top:120.22px;width:6.4px;height:1px;background:#6f6f6f"></div>
<div style="left:750.1px;top:120.22px;width:7px;height:1px;background:#6f6f6f"></div>
<div style="left:733.3px;top:130.05px;width:3.2px;height:1px;background:#6f6f6f"></div>
<div style="left:750.1px;top:130.05px;width:3.2px;height:1px;background:#6f6f6f"></div>
<div style="left:733.3px;top:139.88px;width:3.2px;height:1px;background:#6f6f6f"></div>
<div style="left:750.1px;top:139.88px;width:3.2px;height:1px;background:#6f6f6f"></div>
<div style="left:733.3px;top:149.71px;width:3.2px;height:1px;background:#6f6f6f"></div>
<div style="left:750.1px;top:149.71px;width:3.2px;height:1px;background:#6f6f6f"></div>
<div style="left:730.1px;top:159.54px;width:6.4px;height:1px;background:#6f6f6f"></div>
<div style="left:750.1px;top:159.54px;width:7px;height:1px;background:#6f6f6f"></div>
<div style="left:739.3px;top:148.8px;width:8.4px;height:9.6px;background:#7d7974;border:1px solid #7a776c;border-radius:0.8px"></div>
<div style="left:743.1px;top:157.8px;width:0.8px;height:2.8px;background:#7b7b7b"></div>
<div class="t" style="left:792.3px;top:73.7px;font-size:6.4px;color:#333;transform:translate(-50%,-50%);transform:translate(-50%,-50%) scaleX(0.88);">PW</div>
<div style="left:791.4px;top:81.4px;width:1.8px;height:101.08px;background:#7b7b7b"></div>
<div style="left:791.6px;top:131.8px;width:1.4px;height:50.6px;background:#e01c1c"></div>
<div style="left:778.9px;top:80.9px;width:6.4px;height:1px;background:#6f6f6f"></div>
<div style="left:798.9px;top:80.9px;width:7px;height:1px;background:#6f6f6f"></div>
<div style="left:782.1px;top:93.46px;width:3.2px;height:1px;background:#6f6f6f"></div>
<div style="left:798.9px;top:93.46px;width:3.2px;height:1px;background:#6f6f6f"></div>
<div style="left:782.1px;top:106.02px;width:3.2px;height:1px;background:#6f6f6f"></div>
<div style="left:798.9px;top:106.02px;width:3.2px;height:1px;background:#6f6f6f"></div>
<div style="left:782.1px;top:118.58px;width:3.2px;height:1px;background:#6f6f6f"></div>
<div style="left:798.9px;top:118.58px;width:3.2px;height:1px;background:#6f6f6f"></div>
<div style="left:778.9px;top:131.14px;width:6.4px;height:1px;background:#6f6f6f"></div>
<div style="left:798.9px;top:131.14px;width:7px;height:1px;background:#6f6f6f"></div>
<div style="left:782.1px;top:143.7px;width:3.2px;height:1px;background:#6f6f6f"></div>
<div style="left:798.9px;top:143.7px;width:3.2px;height:1px;background:#6f6f6f"></div>
<div style="left:782.1px;top:156.26px;width:3.2px;height:1px;background:#6f6f6f"></div>
<div style="left:798.9px;top:156.26px;width:3.2px;height:1px;background:#6f6f6f"></div>
<div style="left:782.1px;top:168.82px;width:3.2px;height:1px;background:#6f6f6f"></div>
<div style="left:798.9px;top:168.82px;width:3.2px;height:1px;background:#6f6f6f"></div>
<div style="left:778.9px;top:181.38px;width:6.4px;height:1px;background:#6f6f6f"></div>
<div style="left:798.9px;top:181.38px;width:7px;height:1px;background:#6f6f6f"></div>
<div style="left:788.1px;top:127px;width:8.4px;height:9.6px;background:#9a8a80;border:1px solid #7a776c;border-radius:0.8px"></div>
<div style="left:789.7px;top:129.9px;width:5.2px;height:1.4px;background:#c2402a"></div>
<div style="left:789.7px;top:132.3px;width:5.2px;height:1.4px;background:#c2402a"></div>
<div class="t" style="left:840.3px;top:73.7px;font-size:6.4px;color:#333;transform:translate(-50%,-50%);transform:translate(-50%,-50%) scaleX(0.88);">MIC</div>
<div style="left:839.4px;top:81.4px;width:1.8px;height:79.24px;background:#7b7b7b"></div>
<div style="left:839.6px;top:101px;width:1.4px;height:59.4px;background:#f0b070"></div>
<div style="left:826.9px;top:80.9px;width:6.4px;height:1px;background:#6f6f6f"></div>
<div style="left:846.9px;top:80.9px;width:7px;height:1px;background:#6f6f6f"></div>
<div style="left:830.1px;top:90.73px;width:3.2px;height:1px;background:#6f6f6f"></div>
<div style="left:846.9px;top:90.73px;width:3.2px;height:1px;background:#6f6f6f"></div>
<div style="left:830.1px;top:100.56px;width:3.2px;height:1px;background:#6f6f6f"></div>
<div style="left:846.9px;top:100.56px;width:3.2px;height:1px;background:#6f6f6f"></div>
<div style="left:830.1px;top:110.39px;width:3.2px;height:1px;background:#6f6f6f"></div>
<div style="left:846.9px;top:110.39px;width:3.2px;height:1px;background:#6f6f6f"></div>
<div style="left:826.9px;top:120.22px;width:6.4px;height:1px;background:#6f6f6f"></div>
<div style="left:846.9px;top:120.22px;width:7px;height:1px;background:#6f6f6f"></div>
<div style="left:830.1px;top:130.05px;width:3.2px;height:1px;background:#6f6f6f"></div>
<div style="left:846.9px;top:130.05px;width:3.2px;height:1px;background:#6f6f6f"></div>
<div style="left:830.1px;top:139.88px;width:3.2px;height:1px;background:#6f6f6f"></div>
<div style="left:846.9px;top:139.88px;width:3.2px;height:1px;background:#6f6f6f"></div>
<div style="left:830.1px;top:149.71px;width:3.2px;height:1px;background:#6f6f6f"></div>
<div style="left:846.9px;top:149.71px;width:3.2px;height:1px;background:#6f6f6f"></div>
<div style="left:826.9px;top:159.54px;width:6.4px;height:1px;background:#6f6f6f"></div>
<div style="left:846.9px;top:159.54px;width:7px;height:1px;background:#6f6f6f"></div>
<div style="left:836.1px;top:96.2px;width:8.4px;height:9.6px;background:#a89a58;border:1px solid #7a776c;border-radius:0.8px"></div>
<div style="left:837.7px;top:99.1px;width:5.2px;height:1.4px;background:#e8d838"></div>
<div style="left:837.7px;top:101.5px;width:5.2px;height:1.4px;background:#e8d838"></div>
<div class="t" style="left:792.3px;top:194.7px;font-size:6.4px;color:#333;transform:translate(-50%,-50%);transform:translate(-50%,-50%) scaleX(0.88);">KS</div>
<div style="left:791.4px;top:202.3px;width:1.8px;height:79.24px;background:#7b7b7b"></div>
<div style="left:791.6px;top:258.8px;width:1.4px;height:22.4px;background:#f2c088"></div>
<div style="left:778.9px;top:201.8px;width:6.4px;height:1px;background:#6f6f6f"></div>
<div style="left:798.9px;top:201.8px;width:7px;height:1px;background:#6f6f6f"></div>
<div style="left:782.1px;top:211.63px;width:3.2px;height:1px;background:#6f6f6f"></div>
<div style="left:798.9px;top:211.63px;width:3.2px;height:1px;background:#6f6f6f"></div>
<div style="left:782.1px;top:221.46px;width:3.2px;height:1px;background:#6f6f6f"></div>
<div style="left:798.9px;top:221.46px;width:3.2px;height:1px;background:#6f6f6f"></div>
<div style="left:782.1px;top:231.29px;width:3.2px;height:1px;background:#6f6f6f"></div>
<div style="left:798.9px;top:231.29px;width:3.2px;height:1px;background:#6f6f6f"></div>
<div style="left:778.9px;top:241.12px;width:6.4px;height:1px;background:#6f6f6f"></div>
<div style="left:798.9px;top:241.12px;width:7px;height:1px;background:#6f6f6f"></div>
<div style="left:782.1px;top:250.95px;width:3.2px;height:1px;background:#6f6f6f"></div>
<div style="left:798.9px;top:250.95px;width:3.2px;height:1px;background:#6f6f6f"></div>
<div style="left:782.1px;top:260.78px;width:3.2px;height:1px;background:#6f6f6f"></div>
<div style="left:798.9px;top:260.78px;width:3.2px;height:1px;background:#6f6f6f"></div>
<div style="left:782.1px;top:270.61px;width:3.2px;height:1px;background:#6f6f6f"></div>
<div style="left:798.9px;top:270.61px;width:3.2px;height:1px;background:#6f6f6f"></div>
<div style="left:778.9px;top:280.44px;width:6.4px;height:1px;background:#6f6f6f"></div>
<div style="left:798.9px;top:280.44px;width:7px;height:1px;background:#6f6f6f"></div>
<div style="left:788.1px;top:254px;width:8.4px;height:9.6px;background:#a89a58;border:1px solid #7a776c;border-radius:0.8px"></div>
<div style="left:789.7px;top:256.9px;width:5.2px;height:1.4px;background:#d8c848"></div>
<div style="left:789.7px;top:259.3px;width:5.2px;height:1.4px;background:#d8c848"></div>
<div class="t" style="left:840.3px;top:194.7px;font-size:6.4px;color:#333;transform:translate(-50%,-50%);transform:translate(-50%,-50%) scaleX(0.88);">MON</div>
<div style="left:839.4px;top:202.3px;width:1.8px;height:79.24px;background:#7b7b7b"></div>
<div style="left:839.6px;top:257.6px;width:1.4px;height:23.6px;background:#f2c088"></div>
<div style="left:826.9px;top:201.8px;width:6.4px;height:1px;background:#6f6f6f"></div>
<div style="left:846.9px;top:201.8px;width:7px;height:1px;background:#6f6f6f"></div>
<div style="left:830.1px;top:211.63px;width:3.2px;height:1px;background:#6f6f6f"></div>
<div style="left:846.9px;top:211.63px;width:3.2px;height:1px;background:#6f6f6f"></div>
<div style="left:830.1px;top:221.46px;width:3.2px;height:1px;background:#6f6f6f"></div>
<div style="left:846.9px;top:221.46px;width:3.2px;height:1px;background:#6f6f6f"></div>
<div style="left:830.1px;top:231.29px;width:3.2px;height:1px;background:#6f6f6f"></div>
<div style="left:846.9px;top:231.29px;width:3.2px;height:1px;background:#6f6f6f"></div>
<div style="left:826.9px;top:241.12px;width:6.4px;height:1px;background:#6f6f6f"></div>
<div style="left:846.9px;top:241.12px;width:7px;height:1px;background:#6f6f6f"></div>
<div style="left:830.1px;top:250.95px;width:3.2px;height:1px;background:#6f6f6f"></div>
<div style="left:846.9px;top:250.95px;width:3.2px;height:1px;background:#6f6f6f"></div>
<div style="left:830.1px;top:260.78px;width:3.2px;height:1px;background:#6f6f6f"></div>
<div style="left:846.9px;top:260.78px;width:3.2px;height:1px;background:#6f6f6f"></div>
<div style="left:830.1px;top:270.61px;width:3.2px;height:1px;background:#6f6f6f"></div>
<div style="left:846.9px;top:270.61px;width:3.2px;height:1px;background:#6f6f6f"></div>
<div style="left:826.9px;top:280.44px;width:6.4px;height:1px;background:#6f6f6f"></div>
<div style="left:846.9px;top:280.44px;width:7px;height:1px;background:#6f6f6f"></div>
<div style="left:836.1px;top:252.8px;width:8.4px;height:9.6px;background:#a89a58;border:1px solid #7a776c;border-radius:0.8px"></div>
<div style="left:837.7px;top:255.7px;width:5.2px;height:1.4px;background:#d8c848"></div>
<div style="left:837.7px;top:258.1px;width:5.2px;height:1.4px;background:#d8c848"></div>
<div class="t" style="left:695px;top:194.3px;font-size:6.4px;color:#333;transform:translate(-50%,-50%);transform:translate(-50%,-50%) scaleX(0.88);">NR</div>
<div style="left:694.1px;top:202.3px;width:1.8px;height:79.24px;background:#7b7b7b"></div>
<div style="left:681.6px;top:201.8px;width:6.4px;height:1px;background:#6f6f6f"></div>
<div style="left:701.6px;top:201.8px;width:7px;height:1px;background:#6f6f6f"></div>
<div style="left:684.8px;top:211.63px;width:3.2px;height:1px;background:#6f6f6f"></div>
<div style="left:701.6px;top:211.63px;width:3.2px;height:1px;background:#6f6f6f"></div>
<div style="left:684.8px;top:221.46px;width:3.2px;height:1px;background:#6f6f6f"></div>
<div style="left:701.6px;top:221.46px;width:3.2px;height:1px;background:#6f6f6f"></div>
<div style="left:684.8px;top:231.29px;width:3.2px;height:1px;background:#6f6f6f"></div>
<div style="left:701.6px;top:231.29px;width:3.2px;height:1px;background:#6f6f6f"></div>
<div style="left:681.6px;top:241.12px;width:6.4px;height:1px;background:#6f6f6f"></div>
<div style="left:701.6px;top:241.12px;width:7px;height:1px;background:#6f6f6f"></div>
<div style="left:684.8px;top:250.95px;width:3.2px;height:1px;background:#6f6f6f"></div>
<div style="left:701.6px;top:250.95px;width:3.2px;height:1px;background:#6f6f6f"></div>
<div style="left:684.8px;top:260.78px;width:3.2px;height:1px;background:#6f6f6f"></div>
<div style="left:701.6px;top:260.78px;width:3.2px;height:1px;background:#6f6f6f"></div>
<div style="left:684.8px;top:270.61px;width:3.2px;height:1px;background:#6f6f6f"></div>
<div style="left:701.6px;top:270.61px;width:3.2px;height:1px;background:#6f6f6f"></div>
<div style="left:681.6px;top:280.44px;width:6.4px;height:1px;background:#6f6f6f"></div>
<div style="left:701.6px;top:280.44px;width:7px;height:1px;background:#6f6f6f"></div>
<div style="left:690.8px;top:277px;width:8.4px;height:9.6px;background:#7f9a60;border:1px solid #7a776c;border-radius:0.8px"></div>
<div style="left:692.4px;top:279.9px;width:5.2px;height:1.4px;background:#7fe05f"></div>
<div style="left:692.4px;top:282.3px;width:5.2px;height:1.4px;background:#7fe05f"></div>
<svg style="left:592px;top:174px;" width="11.5" height="9.5" viewBox="0 0 11.5 9.5"><path d="M5.7 0.8L10.8 9H0.6Z" fill="#35d435"/><path d="M5.7 1.4V9" stroke="#d02020" stroke-width="1"/></svg>
<div class="b" style="left:627.6px;top:169.3px;width:37.8px;height:18.7px;border-left-color:#f0f0f0;border-top-color:#f0f0f0"><span class="bl" style="font-size:8.5px;color:#4a4a4a;margin-left:-5px">NAR</span><i class="ind"></i></div>
<div class="b" style="left:667.8px;top:168.8px;width:35.2px;height:19.2px;border-left-color:#f0f0f0;border-top-color:#f0f0f0"><span class="bl" style="font-size:8.5px;color:#4a4a4a;margin-left:-5px">NB:</span><i class="ind"></i></div>
<div style="left:703px;top:168.6px;width:11.4px;height:19.4px;background:#0580c1"></div>
<div class="t" style="left:708.6px;top:177px;font-size:7.6px;color:#cfe3f2;transform:translate(-50%,-50%);">1</div>
<div class="b d" style="left:724.4px;top:169.3px;width:39.2px;height:18.7px;"><span class="bl" style="font-size:8.5px;color:#a8a8a8;margin-left:0px">LOW</span></div>
<div style="left:758.6px;top:173px;width:2px;height:10.6px;background:#b9cfe6"></div>
<div class="b" style="left:724.4px;top:190px;width:39.2px;height:17.8px;border-color:#f0f0f0 #cfcfcf #dcdcdc #f0f0f0;box-shadow:none"><span class="bl" style="font-size:8.5px;color:#a8a8a8;margin-left:0px">HI</span></div>
<div style="left:758.4px;top:193.6px;width:2px;height:10.4px;background:#f6f6f6;border:0.6px solid #c8c8c8"></div>
<div class="b" style="left:724.4px;top:209.4px;width:39.2px;height:19.6px;border-color:#f0f0f0;box-shadow:none"></div>
<svg style="left:739.2px;top:214.6px;" width="10" height="9.6" viewBox="0 0 10 9.6"><rect x="1" y="3.4" width="5.6" height="5" fill="#c9c9c9" stroke="#444" stroke-width="0.7"/><rect x="4" y="1" width="5" height="4" fill="#e8e8e8" stroke="#444" stroke-width="0.7"/><rect x="2.4" y="5" width="2.6" height="1.6" fill="#555"/></svg>
<div style="left:724px;top:231.4px;width:39.8px;height:16.6px;background:#0580c1"></div>
<div class="t" style="left:744px;top:237.6px;font-size:8px;color:#b8daf0;transform:translate(-50%,-50%);">-300</div>
<div class="b" style="left:724.4px;top:252px;width:39.2px;height:17.6px;"><span class="bl" style="font-size:8.5px;color:#4a4a4a;margin-left:-3px">CO</span><i class="ind"></i></div>
<div class="b d" style="left:724.4px;top:271.6px;width:39.2px;height:17px;"><span class="bl" style="font-size:8.5px;color:#4a4a4a;margin-left:0px">OFF</span></div>
<div class="b" style="left:724.4px;top:291.6px;width:39.2px;height:17.8px;"><span class="bl" style="font-size:8.5px;color:#4a4a4a;margin-left:-3px">APF</span><i class="ind"></i></div>
<div class="b" style="left:688px;top:291.6px;width:26.4px;height:17.8px;"><span class="bl" style="font-size:8.5px;color:#4a4a4a;margin-left:-3px">NR</span><i class="ind"></i></div>
<div class="b" style="left:820.8px;top:168px;width:39.8px;height:19px;"><span class="bl" style="font-size:8.5px;color:#4a4a4a;margin-left:-4px">TXEQ</span><i class="ind"></i></div>
<div class="b" style="left:772px;top:289.8px;width:40px;height:19.6px;"><span class="bl" style="font-size:7.6px;color:#4a4a4a;margin-left:-5px">Keyer</span><i class="ind"></i></div>
<div class="b" style="left:820.6px;top:289.8px;width:39.8px;height:19.6px;"><span class="bl" style="font-size:7.8px;color:#4a4a4a;margin-left:-4px">MON</span><i class="ind"></i></div>
<div class="b" style="left:868.6px;top:70px;width:39.8px;height:19.4px;border-left-color:#f0f0f0"><span class="bl" style="font-size:8px;color:#4a4a4a;margin-left:0px">KM1</span></div>
<div class="b" style="left:868.6px;top:89.56px;width:39.8px;height:19.4px;border-left-color:#f0f0f0"><span class="bl" style="font-size:8px;color:#4a4a4a;margin-left:0px">KM2</span></div>
<div class="b" style="left:868.6px;top:109.12px;width:39.8px;height:19.4px;border-left-color:#f0f0f0"><span class="bl" style="font-size:8px;color:#4a4a4a;margin-left:0px">KM3</span></div>
<div class="b" style="left:868.6px;top:128.68px;width:39.8px;height:19.4px;border-left-color:#f0f0f0"><span class="bl" style="font-size:8px;color:#4a4a4a;margin-left:0px">KM4</span></div>
<div class="b" style="left:868.6px;top:148.24px;width:39.8px;height:19.4px;border-left-color:#f0f0f0"><span class="bl" style="font-size:8px;color:#4a4a4a;margin-left:0px">KM5</span></div>
<div class="b" style="left:868.6px;top:167.8px;width:39.8px;height:19.4px;border-left-color:#f0f0f0"><span class="bl" style="font-size:8px;color:#4a4a4a;margin-left:0px">SET</span></div>
<div class="b" style="left:868.6px;top:212.4px;width:39.8px;height:19.3px;border-left-color:#f0f0f0"><span class="bl" style="font-size:8px;color:#4a4a4a;margin-left:0px">VM1</span></div>
<div class="b" style="left:868.6px;top:231.84px;width:39.8px;height:19.3px;border-left-color:#f0f0f0"><span class="bl" style="font-size:8px;color:#4a4a4a;margin-left:0px">VM2</span></div>
<div class="b" style="left:868.6px;top:251.28px;width:39.8px;height:19.3px;border-left-color:#f0f0f0"><span class="bl" style="font-size:8px;color:#4a4a4a;margin-left:0px">VM3</span></div>
<div class="b" style="left:868.6px;top:270.72px;width:39.8px;height:19.3px;border-left-color:#f0f0f0"><span class="bl" style="font-size:8px;color:#4a4a4a;margin-left:0px">VM4</span></div>
<div class="b" style="left:868.6px;top:290.16px;width:39.8px;height:19.3px;border-left-color:#f0f0f0"><span class="bl" style="font-size:8px;color:#4a4a4a;margin-left:0px">VM5</span></div>
<div style="left:917.6px;top:69px;width:1px;height:240.6px;background:#dedede;box-shadow:1px 0 0 #fdfdfd"></div>
<div style="left:919.6px;top:72px;width:94px;height:19px;background:#0580c1"></div>
<div class="t" style="left:966.4px;top:81.2px;font-size:10.4px;color:#e6f1f9;transform:translate(-50%,-50%);">A:W 200/0Hz</div>
<div class="b" style="left:921.8px;top:94px;width:39.7px;height:20px;"><span class="bl" style="font-size:8.5px;color:#a8a8a8;margin-left:0px">ANT</span></div>
<div style="left:966px;top:95.2px;width:46.4px;height:14.6px;background:#fbfbfb;border:1px solid;border-color:#9a9a9a #ededed #ededed #9a9a9a"></div>
<div style="left:967px;top:96.2px;width:35.4px;height:12.6px;background:#0580c1"></div>
<svg style="left:1004.4px;top:100.7px;" width="5" height="4" viewBox="0 0 5 4"><path d="M0.6 0.8H4.4L2.5 3.2Z" fill="#111"/></svg>
<div class="b" style="left:921.8px;top:118.3px;width:39.7px;height:19.7px;"><span class="bl" style="font-size:8.5px;color:#4a4a4a;margin-left:0px">PRE</span></div>
<div style="left:966px;top:119.6px;width:46.4px;height:14.6px;background:#fbfbfb;border:1px solid;border-color:#9a9a9a #ededed #ededed #9a9a9a"></div>
<div style="left:967px;top:120.6px;width:35.4px;height:12.6px;background:#0580c1"></div>
<div class="t" style="left:968.4px;top:126.9px;font-size:7.6px;color:#b8daf0;transform:translate(0,-50%);">ON</div>
<svg style="left:1004.4px;top:125.1px;" width="5" height="4" viewBox="0 0 5 4"><path d="M0.6 0.8H4.4L2.5 3.2Z" fill="#111"/></svg>
<div class="b" style="left:921.8px;top:141.7px;width:39.7px;height:19.3px;"><span class="bl" style="font-size:8.5px;color:#4a4a4a;margin-left:0px">ATT</span></div>
<div style="left:966px;top:143px;width:46.4px;height:13.8px;background:#fbfbfb;border:1px solid;border-color:#9a9a9a #ededed #ededed #9a9a9a"></div>
<div style="left:967px;top:144px;width:35.4px;height:11.8px;background:#0580c1"></div>
<div class="t" style="left:968.4px;top:149.9px;font-size:7.6px;color:#b8daf0;transform:translate(0,-50%);">OFF</div>
<svg style="left:1004.4px;top:148.1px;" width="5" height="4" viewBox="0 0 5 4"><path d="M0.6 0.8H4.4L2.5 3.2Z" fill="#111"/></svg>
<div class="b" style="left:921.8px;top:165.6px;width:39.7px;height:20.1px;"><span class="bl" style="font-size:8px;color:#a8a8a8;margin-left:0px">R.FLT</span></div>
<div style="left:966px;top:166.8px;width:46.4px;height:13.9px;background:#fbfbfb;border:1px solid;border-color:#9a9a9a #ededed #ededed #9a9a9a"></div>
<div style="left:967px;top:167.8px;width:35.4px;height:11.9px;background:#0580c1"></div>
<svg style="left:1004.4px;top:171.95px;" width="5" height="4" viewBox="0 0 5 4"><path d="M0.6 0.8H4.4L2.5 3.2Z" fill="#111"/></svg>
<div class="b" style="left:921.8px;top:188.8px;width:39.7px;height:19.7px;"><span class="bl" style="font-size:8.5px;color:#4a4a4a;margin-left:0px">AGC</span></div>
<div style="left:966px;top:191px;width:46.4px;height:14px;background:#fbfbfb;border:1px solid;border-color:#9a9a9a #ededed #ededed #9a9a9a"></div>
<div style="left:967px;top:192px;width:35.4px;height:12px;background:#0580c1"></div>
<div class="t" style="left:968.4px;top:198px;font-size:7.6px;color:#b8daf0;transform:translate(0,-50%);">OFF</div>
<svg style="left:1004.4px;top:196.2px;" width="5" height="4" viewBox="0 0 5 4"><path d="M0.6 0.8H4.4L2.5 3.2Z" fill="#111"/></svg>
<div class="b" style="left:921.8px;top:213px;width:39.7px;height:19.4px;"><span class="bl" style="font-size:8.5px;color:#4a4a4a;margin-left:-3px">ANF</span><i class="ind"></i></div>
<div class="b" style="left:970.4px;top:213px;width:39.4px;height:19.4px;"><span class="bl" style="font-size:8.5px;color:#4a4a4a;margin-left:0px">MET</span></div>
<div class="b" style="left:921.8px;top:236.8px;width:39.7px;height:19.2px;"><span class="bl" style="font-size:8px;color:#4a4a4a;margin-left:0px">SPOT</span></div>
<div class="b" style="left:970.4px;top:236.8px;width:39.4px;height:19.2px;"><span class="bl" style="font-size:8px;color:#4a4a4a;margin-left:0px">ZERO</span></div>
<div style="left:923.6px;top:263px;width:88.8px;height:1px;background:#8e8e8e;box-shadow:0 1px 0 #fff"></div>
<div class="b" style="left:921.8px;top:267.4px;width:39.7px;height:19px;"><span class="bl" style="font-size:7.8px;color:#4a4a4a;margin-left:-3px">BKIN</span><i class="ind"></i></div>
<div style="left:966px;top:269.6px;width:46.4px;height:13.4px;background:#fbfbfb;border:1px solid;border-color:#9a9a9a #ededed #ededed #9a9a9a"></div>
<div style="left:967px;top:270.6px;width:35.4px;height:11.4px;background:#0580c1"></div>
<div class="t" style="left:968.4px;top:276.3px;font-size:7.6px;color:#b8daf0;transform:translate(0,-50%);">200</div>
<svg style="left:1004.4px;top:274.5px;" width="5" height="4" viewBox="0 0 5 4"><path d="M0.6 0.8H4.4L2.5 3.2Z" fill="#111"/></svg>
<div class="b" style="left:921.8px;top:290.6px;width:39.7px;height:19.4px;"><span class="bl" style="font-size:8.5px;color:#4a4a4a;margin-left:-3px">VOX</span><i class="ind"></i></div>
<div class="b" style="left:970.4px;top:290.6px;width:39.4px;height:19.4px;"><span class="bl" style="font-size:7.8px;color:#4a4a4a;margin-left:-3px">PROC</span><i class="ind"></i></div>
<div class="win" style="left:-1px;top:49.4px;width:521px;height:263.2px;"></div>
<div style="left:3.6px;top:55.6px;width:5.4px;height:5px;background:#3a3a3a;border-radius:1.2px"></div>
<div style="left:4.4px;top:56.8px;width:1.4px;height:2.2px;background:#ddd"></div>
<div style="left:6.8px;top:56.8px;width:1.4px;height:2.2px;background:#ddd"></div>
<div class="wt" style="left:236.8px;top:60.5px">Monitoring [FT-891]</div>
<div class="cb" style="left:462.6px;top:54.6px;width:15.6px;height:9.6px;"></div>
<svg style="left:466.4px;top:56.4px;" width="8" height="6" viewBox="0 0 8 6"><rect x="1" y="2.6" width="6" height="2.8" fill="#f2f5f9" stroke="#8592a3" stroke-width="0.8"/></svg>
<div class="cb" style="left:480.4px;top:54.6px;width:15.6px;height:9.6px;"></div>
<svg style="left:484.2px;top:55.9px;" width="8" height="7" viewBox="0 0 8 7"><rect x="1.2" y="0.9" width="5.6" height="5.2" fill="#f2f5f9" stroke="#8592a3" stroke-width="0.8"/><rect x="2.8" y="2.6" width="2.4" height="2" fill="none" stroke="#8592a3" stroke-width="0.7"/></svg>
<div class="cb" style="left:498.6px;top:54.6px;width:16px;height:9.6px;"></div>
<svg style="left:502.6px;top:55.9px;" width="8" height="7" viewBox="0 0 8 7"><rect x="1.2" y="0.9" width="5.6" height="5.2" fill="#f2f5f9" stroke="#8592a3" stroke-width="0.8"/><path d="M2.6 2.2L5.4 4.8M5.4 2.2L2.6 4.8" stroke="#8592a3" stroke-width="0.7"/></svg>
<div style="left:2.6px;top:66.8px;width:514.4px;height:243.2px;background:#f0f0f0"></div>
<div style="left:5px;top:68.2px;width:508.6px;height:124.6px;background:#0580c1"></div>
<svg style="left:5px;top:68px;font-family:&quot;Liberation Sans&quot;,sans-serif" width="130" height="62" viewBox="0 0 130 62"><path d="M12.6 34.8 A107.5 107.5 0 0 1 66.6 21.01" fill="none" stroke="#c8f05a" stroke-width="1.5"/><path d="M66.6 21.01 A107.5 107.5 0 0 1 118 34.8" fill="none" stroke="#b04052" stroke-width="1.5"/><path d="M12.6 34.8 L11.13 32.19" stroke="#c8f05a" stroke-width="0.8"/><path d="M21.5 30.33 L20.85 28.87" stroke="#c8f05a" stroke-width="0.8"/><path d="M30.2 26.89 L29.22 24.06" stroke="#c8f05a" stroke-width="0.8"/><path d="M38.8 24.32 L38.41 22.77" stroke="#c8f05a" stroke-width="0.8"/><path d="M47.4 22.5 L46.9 19.54" stroke="#c8f05a" stroke-width="0.8"/><path d="M53.6 21.64 L53.43 20.05" stroke="#c8f05a" stroke-width="0.8"/><path d="M59.8 21.14 L59.72 19.54" stroke="#c8f05a" stroke-width="0.8"/><path d="M66.2 21 L66.24 16.8" stroke="#c8f05a" stroke-width="0.8"/><path d="M84.5 22.73 L85.04 19.78" stroke="#b04052" stroke-width="0.8"/><path d="M93.5 24.76 L93.92 23.22" stroke="#b04052" stroke-width="0.8"/><path d="M102 27.46 L103.02 24.64" stroke="#b04052" stroke-width="0.8"/><path d="M110 30.73 L110.67 29.28" stroke="#b04052" stroke-width="0.8"/><path d="M118 34.8 L119.47 32.19" stroke="#b04052" stroke-width="0.8"/><path d="M17.6 39.5 A95.7 95.7 0 0 1 115.6 39.5" fill="none" stroke="#a9d2ec" stroke-width="1"/><path d="M17.6 39.5 L18.83 41.56" stroke="#a9d2ec" stroke-width="0.7"/><path d="M27.4 34.4 L27.97 35.67" stroke="#a9d2ec" stroke-width="0.7"/><path d="M37.2 30.63 L37.94 32.91" stroke="#a9d2ec" stroke-width="0.7"/><path d="M47 28.03 L47.29 29.4" stroke="#a9d2ec" stroke-width="0.7"/><path d="M56.8 26.5 L57.05 28.89" stroke="#a9d2ec" stroke-width="0.7"/><path d="M66.6 26 L66.6 27.4" stroke="#a9d2ec" stroke-width="0.7"/><path d="M76.4 26.5 L76.15 28.89" stroke="#a9d2ec" stroke-width="0.7"/><path d="M86.2 28.03 L85.91 29.4" stroke="#a9d2ec" stroke-width="0.7"/><path d="M96 30.63 L95.26 32.91" stroke="#a9d2ec" stroke-width="0.7"/><path d="M105.8 34.4 L105.23 35.67" stroke="#a9d2ec" stroke-width="0.7"/><path d="M115.6 39.5 L114.37 41.56" stroke="#a9d2ec" stroke-width="0.7"/><text x="12.6" y="28.2" font-size="6.4" fill="#c8f05a" text-anchor="middle">0</text><text x="29.7" y="21.2" font-size="6.4" fill="#c8f05a" text-anchor="middle">3</text><text x="46.5" y="16.9" font-size="6.4" fill="#c8f05a" text-anchor="middle">6</text><text x="65.4" y="15" font-size="6.4" fill="#c8f05a" text-anchor="middle">9</text><text x="84" y="17" font-size="5.6" fill="#b04052" text-anchor="middle">+20</text><text x="102.5" y="21" font-size="5.6" fill="#b04052" text-anchor="middle">+40</text><text x="118.6" y="28" font-size="5.6" fill="#b04052" text-anchor="middle">+60</text><text x="17.6" y="47.2" font-size="6.2" fill="#a9d2ec" text-anchor="middle">0</text><text x="36.5" y="40" font-size="6.2" fill="#a9d2ec" text-anchor="middle">2</text><text x="55.3" y="36" font-size="6.2" fill="#a9d2ec" text-anchor="middle">4</text><text x="74.9" y="35.4" font-size="6.2" fill="#a9d2ec" text-anchor="middle">6</text><text x="95" y="39.5" font-size="6.2" fill="#a9d2ec" text-anchor="middle">8</text><text x="113" y="47.1" font-size="6.2" fill="#a9d2ec" text-anchor="middle">10</text><text x="66.6" y="57" font-size="5.6" fill="#8fc1e3" text-anchor="middle">114µV + 10</text><path d="M72.9 16.7 L69.9 58.8" stroke="#e8a860" stroke-width="1"/></svg>
<svg style="left:130px;top:80px;" width="110" height="32" viewBox="0 0 110 32"><path d="M6.4 28.6H108.7" stroke="#f4f8fb" stroke-width="1"/><path d="M30.4 28.4 C34.2 26 34.6 5.2 38.8 5.2 C43 5.2 43.4 26 47.2 28.4Z" fill="#9c9690" stroke="#f4f8fb" stroke-width="0.9"/><path d="M38.8 6V28.4" stroke="#f4f8fb" stroke-width="0.8"/></svg>
<div class="t" style="left:187px;top:122px;font-size:6.3px;color:#b5d6ec;transform:translate(-50%,-50%);">WID 200Hz</div>
<div class="t" style="left:259px;top:74px;font-size:19px;color:#eef6fb;height:20px;width:140px">
<span class="a" style="left:9.5px;top:0;transform:translateX(-50%)">1</span>
<span class="a" style="left:29px;top:0;transform:translateX(-50%)">8</span>
<span class="a" style="left:39.2px;top:0;transform:translateX(-50%)">.</span>
<span class="a" style="left:48px;top:0;transform:translateX(-50%)">1</span>
<span class="a" style="left:66.5px;top:0;transform:translateX(-50%)">0</span>
<span class="a" style="left:86px;top:0;transform:translateX(-50%)">0</span>
<span class="a" style="left:95.2px;top:0;transform:translateX(-50%)">.</span>
<span class="a" style="left:105px;top:0;transform:translateX(-50%)">0</span>
<span class="a" style="left:124.5px;top:0;transform:translateX(-50%)">0</span>
</div>
<div class="t" style="left:318.5px;top:103.4px;font-size:9.5px;color:#e4f0f8;transform:translate(-50%,-50%);">MAN. USB</div>
<div class="t" style="left:442.2px;top:83.4px;font-size:15px;color:#eef6fb;transform:translate(-50%,-50%);">18.100.50</div>
<div class="t" style="left:444.3px;top:103.4px;font-size:9.5px;color:#e4f0f8;transform:translate(-50%,-50%);">SPLIT +0.50 USB</div>
<div style="left:241.8px;top:114.7px;width:75.8px;height:13.6px;border:1px solid #2aa36b"></div>
<div class="t" style="left:279.6px;top:121.7px;font-size:8.8px;color:#e4f0f8;transform:translate(-50%,-50%);">A 18.100.00</div>
<div style="left:320px;top:114.7px;width:76px;height:13.6px;border:1px solid #9a4a58"></div>
<div class="t" style="left:357.7px;top:121.7px;font-size:8.8px;color:#e4f0f8;transform:translate(-50%,-50%);">B 18.100.50</div>
<div class="t" style="left:442.6px;top:121.7px;font-size:8.8px;color:#e4f0f8;transform:translate(-50%,-50%);">C1 14.230.00</div>
<div class="t" style="left:345.5px;top:136.8px;font-size:10.2px;color:#eef6fb;transform:translate(-50%,-50%);">[DATA]</div>
<div class="t" style="left:226.4px;top:136.8px;font-size:10.2px;color:#eef6fb;transform:translate(-50%,-50%);">RECEIVE</div>
<div style="left:190.3px;top:132.3px;width:9.4px;height:13.5px;background:#0cf20c;border:0.8px solid #7fe87f"></div>
<div class="t" style="left:83.5px;top:136.8px;font-size:10.2px;color:#eef6fb;transform:translate(-50%,-50%);">50W</div>
<div style="left:6.8px;top:130.5px;width:62.2px;height:17.5px;border:1px solid #e8f1f8;background:#0580c1"></div>
<div class="t" style="left:9px;top:138.8px;font-size:8px;color:#9dcbea;transform:translate(0,-50%);">S-Meter</div>
<div style="left:59px;top:131.5px;width:9px;height:15.5px;background:#fbfbfb"></div>
<svg style="left:61.5px;top:138px;" width="4.5" height="4" viewBox="0 0 4.5 4"><path d="M0.6 0.8H3.9L2.25 3Z" fill="#111"/></svg>
<svg style="left:491px;top:71.5px;" width="9" height="9" viewBox="0 0 9 9"><path d="M4.5 1V8M1 4.5H8" stroke="#e8f2f9" stroke-width="1.2"/></svg>
<svg style="left:491px;top:93px;" width="9" height="5" viewBox="0 0 9 5"><path d="M1 2.5H8" stroke="#d4e6f3" stroke-width="1.1"/></svg>
<svg style="left:491.5px;top:110.5px;" width="8.5" height="10" viewBox="0 0 8.5 10"><path d="M1.2 0.8H5.3L7.3 2.8V9.2H1.2Z" fill="#f6f1c8" stroke="#e6e6e6" stroke-width="0.6"/><circle cx="4.2" cy="5.4" r="1.6" fill="none" stroke="#a89a20" stroke-width="0.8"/></svg>
<svg style="left:491.5px;top:129px;" width="8.5" height="9.5" viewBox="0 0 8.5 9.5"><path d="M1 1.6L4.2 0.6L7.4 1.6V6.4L4.2 8.8L1 6.4Z" fill="#b2344c" stroke="#d9e6f0" stroke-width="0.6"/><path d="M2.6 2.4H5.8V5H2.6Z" fill="#e8d8dc"/></svg>
<div style="left:7.6px;top:153px;width:18.8px;height:31.8px;border:1px solid #e8f1f8;background:#0580c1"></div>
<svg style="left:12.5px;top:164.5px;" width="9" height="9" viewBox="0 0 9 9"><path d="M4.5 8L8.4 1H0.6Z" fill="#7e0f16"/></svg>
<div style="left:29px;top:153px;width:18.8px;height:31.8px;border:1px solid #e8f1f8;background:#0580c1"></div>
<svg style="left:33.9px;top:164.5px;" width="9" height="9" viewBox="0 0 9 9"><path d="M4.5 1L8.4 8H0.6Z" fill="#7e0f16"/></svg>
<div style="left:51.5px;top:157.1px;width:401.7px;height:8.2px;background:#800000;border-top:0.7px solid #b88a8a;border-left:0.7px solid #b88a8a"></div>
<div style="left:73.2px;top:151.5px;width:3.4px;height:19.1px;background:#800000;border:0.7px solid #c9a0a4"></div>
<div style="left:216.3px;top:151.5px;width:3.4px;height:19.1px;background:#800000;border:0.7px solid #c9a0a4"></div>
<div style="left:286.9px;top:151.5px;width:3.4px;height:19.1px;background:#800000;border:0.7px solid #c9a0a4"></div>
<div style="left:357.8px;top:151.5px;width:3.4px;height:19.1px;background:#800000;border:0.7px solid #c9a0a4"></div>
<div style="left:428.9px;top:151.5px;width:3.4px;height:19.1px;background:#800000;border:0.7px solid #c9a0a4"></div>
<div style="left:143.2px;top:150px;width:7px;height:21.5px;background:#ffee10;border:0.6px solid #fff9a0"></div>
<div style="left:144.6px;top:160.3px;width:4.2px;height:1px;background:#6a5a10"></div>
<div class="t" style="left:57.6px;top:181px;font-size:8.2px;color:#c0dcf0;transform:translate(-50%,-50%);">&lt;&lt;</div>
<div class="t" style="left:83px;top:181px;font-size:8.2px;color:#c0dcf0;transform:translate(-50%,-50%);">18.000</div>
<div class="t" style="left:145.7px;top:181px;font-size:8.2px;color:#c0dcf0;transform:translate(-50%,-50%);">18.100</div>
<div class="t" style="left:217.3px;top:181px;font-size:8.2px;color:#c0dcf0;transform:translate(-50%,-50%);">18.200</div>
<div class="t" style="left:288.7px;top:181px;font-size:8.2px;color:#c0dcf0;transform:translate(-50%,-50%);">18.300</div>
<div class="t" style="left:359.5px;top:181px;font-size:8.2px;color:#c0dcf0;transform:translate(-50%,-50%);">18.400</div>
<div class="t" style="left:420.2px;top:181px;font-size:8.2px;color:#c0dcf0;transform:translate(-50%,-50%);">18.500</div>
<div class="t" style="left:448px;top:181px;font-size:8.2px;color:#c0dcf0;transform:translate(-50%,-50%);">&gt;&gt;</div>
<div style="left:461.8px;top:151.4px;width:44.6px;height:15.6px;border:1px solid #e8f1f8"></div>
<div class="t" style="left:484px;top:159.4px;font-size:8.4px;color:#c5def0;transform:translate(-50%,-50%);">INC</div>
<div style="left:462.4px;top:169px;width:44.4px;height:14.3px;border:1px solid #e8f1f8"></div>
<div class="t" style="left:464.6px;top:176px;font-size:7.8px;color:#a8d0ea;transform:translate(0,-50%);">500</div>
<div style="left:497px;top:170px;width:8.8px;height:12.3px;background:#fbfbfb"></div>
<svg style="left:499.2px;top:174.6px;" width="4.6" height="4" viewBox="0 0 4.6 4"><path d="M0.6 0.8H3.9L2.25 3Z" fill="#111"/></svg>
<div class="b" style="left:7.8px;top:198.6px;width:28.8px;height:16.4px;"><span class="bl" style="font-size:8.5px;color:#4a4a4a;margin-left:0px"><span class=u>S</span>plit</span></div>
<div class="b" style="left:39px;top:198.6px;width:28.4px;height:16.4px;"><span class="bl" style="font-size:8.5px;color:#4a4a4a;margin-left:0px">TXW</span></div>
<div class="b" style="left:70.9px;top:198.6px;width:28.4px;height:16.4px;"><span class="bl" style="font-size:8.5px;color:#4a4a4a;margin-left:0px"><span class=u>Q</span>SX</span></div>
<div class="b" style="left:103px;top:198.6px;width:29px;height:16.4px;"><span class="bl" style="font-size:8.5px;color:#4a4a4a;margin-left:0px">Scan</span></div>
<div class="b" style="left:7.8px;top:217.4px;width:28.8px;height:16.4px;"><span class="bl" style="font-size:8.5px;color:#4a4a4a;margin-left:0px"><span class=u>A</span></span></div>
<div class="b" style="left:39px;top:217.4px;width:28.4px;height:16.4px;"><span class="bl" style="font-size:8.5px;color:#4a4a4a;margin-left:0px">STO</span></div>
<div class="b" style="left:70.9px;top:217.4px;width:28.4px;height:16.4px;"><span class="bl" style="font-size:8.5px;color:#4a4a4a;margin-left:0px">RCL</span></div>
<div class="b" style="left:7.8px;top:236px;width:28.8px;height:16.4px;"><span class="bl" style="font-size:8.5px;color:#4a4a4a;margin-left:0px"><span class=u>B</span></span></div>
<div class="b" style="left:39px;top:236px;width:28.4px;height:16.4px;"><span class="bl" style="font-size:8.5px;color:#4a4a4a;margin-left:0px">A/B</span></div>
<div class="b" style="left:70.9px;top:236px;width:28.4px;height:16.4px;"><span class="bl" style="font-size:8.5px;color:#4a4a4a;margin-left:0px">B=A</span></div>
<div class="b" style="left:7.8px;top:254.8px;width:28.8px;height:16.4px;"><span class="bl" style="font-size:8.5px;color:#4a4a4a;margin-left:0px"><span class=u>C</span></span></div>
<div class="b" style="left:103px;top:254.8px;width:29px;height:16.4px;"><span class="bl" style="font-size:8.5px;color:#4a4a4a;margin-left:0px"><span class=u>V</span>&gt;M</span></div>
<div style="left:40.2px;top:254px;width:7.6px;height:7.6px;background:#8c8c8c"></div>
<svg style="left:40.2px;top:254px;" width="7.6" height="7.6" viewBox="0 0 7.6 7.6"><path d="M1.52 2.43 L3.8 5.32 L6.08 2.43" stroke="#f2f2f2" stroke-width="1.2" fill="none"/></svg>
<div style="left:56.6px;top:254px;width:8.2px;height:7.6px;background:#8c8c8c"></div>
<svg style="left:56.6px;top:254px;" width="8.2" height="7.6" viewBox="0 0 8.2 7.6"><path d="M1.64 5.17 L4.1 2.28 L6.56 5.17" stroke="#f2f2f2" stroke-width="1.2" fill="none"/></svg>
<div style="left:74px;top:255.2px;width:23.6px;height:15.8px;background:#0580c1"></div>
<div class="t" style="left:85.8px;top:261px;font-size:8px;color:#cfe3f2;transform:translate(-50%,-50%);">1</div>
<div class="b" style="left:8.3px;top:285px;width:16.5px;height:17.6px;"><span class="bl" style="font-size:8.5px;color:#4a4a4a;margin-left:0px">O</span></div>
<div style="left:27px;top:286px;width:7.8px;height:7.6px;background:#8c8c8c"></div>
<svg style="left:27px;top:286px;" width="7.8" height="7.6" viewBox="0 0 7.8 7.6"><path d="M1.56 2.43 L3.9 5.32 L6.24 2.43" stroke="#f2f2f2" stroke-width="1.2" fill="none"/></svg>
<div style="left:44px;top:286px;width:8.4px;height:7.6px;background:#8c8c8c"></div>
<svg style="left:44px;top:286px;" width="8.4" height="7.6" viewBox="0 0 8.4 7.6"><path d="M1.68 5.17 L4.2 2.28 L6.72 5.17" stroke="#f2f2f2" stroke-width="1.2" fill="none"/></svg>
<div style="left:59.5px;top:285px;width:42.3px;height:16px;background:#0580c1"></div>
<div class="t" style="left:77px;top:290px;font-size:7.8px;color:#cfe3f2;transform:translate(-50%,-50%);">0.00</div>
<div class="b" style="left:105px;top:285.4px;width:27px;height:17.2px;"><span class="bl" style="font-size:8.5px;color:#4a4a4a;margin-left:0px">CLR</span></div>
<div style="left:135.2px;top:196px;width:1px;height:112px;background:#d9d9d9;box-shadow:1px 0 0 #fff"></div>
<div class="b" style="left:140px;top:198.6px;width:29.6px;height:17.8px;"><span class="bl" style="font-size:8.5px;color:#4a4a4a;margin-left:0px">Fast</span></div>
<div class="b" style="left:140px;top:220.6px;width:29.6px;height:18.4px;"></div>
<svg style="left:150.4px;top:225.5px;" width="9" height="9" viewBox="0 0 9 9"><rect x="0.8" y="1.6" width="7.4" height="6.4" fill="#7a1f2a" stroke="#3a1a1a" stroke-width="0.6"/><rect x="2" y="3" width="2" height="2" fill="#e6dede"/><rect x="5" y="3" width="2" height="2" fill="#e6dede"/><path d="M1.6 1.4L2.6 0.4M7.4 1.4L6.4 0.4" stroke="#333" stroke-width="0.6"/></svg>
<div class="b d" style="left:140px;top:242px;width:29.6px;height:20.4px;"><span class="bl" style="font-size:8.5px;color:#4a4a4a;margin-left:0px">Dial</span></div>
<div class="b d" style="left:140px;top:265.4px;width:29.6px;height:18.8px;"></div>
<svg style="left:151.4px;top:270.2px;" width="7" height="9" viewBox="0 0 7 9"><path d="M2 4V2.6A1.5 1.5 0 0 1 5 2.6V4" fill="none" stroke="#444" stroke-width="0.8"/><rect x="1.2" y="4" width="4.6" height="3.6" fill="#bdbdbd" stroke="#444" stroke-width="0.7"/></svg>
<div class="b d" style="left:140px;top:287.5px;width:24.4px;height:19.3px;"><span class="bl" style="font-size:8.5px;color:#4a4a4a;margin-left:0px">OP</span></div>
<div style="left:164.6px;top:286.8px;width:5px;height:20px;background:#2fd02f;border:0.6px solid #7fe07f"></div>
<div style="left:173.2px;top:198.6px;width:82.2px;height:108.2px;background:#a3a3a3"></div>
<div style="left:173.2px;top:198.6px;width:82.2px;height:32px;background:#0b73ac"></div>
<svg style="left:173.2px;top:198.6px;font-family:&quot;Liberation Sans&quot;,sans-serif" width="82.2" height="108.2" viewBox="0 0 82.2 108.2"><path d="M0 6.8 Q41.2 -3.4 82.2 6.8" fill="none" stroke="#8fc0de" stroke-width="0.6"/><path d="M0 21.63 Q41.2 7.6 82.2 21.57" fill="none" stroke="#e8f1f7" stroke-width="1"/><path d="M5 20.03 L4.5 13.83" stroke="#dfeaf2" stroke-width="0.7"/><path d="M12.24 18.08 L11.84 14.88" stroke="#dfeaf2" stroke-width="0.7"/><path d="M19.48 16.55 L19.18 13.35" stroke="#dfeaf2" stroke-width="0.7"/><path d="M26.72 15.47 L26.52 12.27" stroke="#dfeaf2" stroke-width="0.7"/><path d="M33.96 14.82 L33.86 11.62" stroke="#dfeaf2" stroke-width="0.7"/><path d="M41.2 14.6 L41.2 8.4" stroke="#dfeaf2" stroke-width="0.7"/><path d="M48.44 14.82 L48.54 11.62" stroke="#dfeaf2" stroke-width="0.7"/><path d="M55.68 15.47 L55.88 12.27" stroke="#dfeaf2" stroke-width="0.7"/><path d="M62.92 16.55 L63.22 13.35" stroke="#dfeaf2" stroke-width="0.7"/><path d="M70.16 18.08 L70.56 14.88" stroke="#dfeaf2" stroke-width="0.7"/><path d="M77.4 20.03 L77.9 13.83" stroke="#dfeaf2" stroke-width="0.7"/><text x="9.6" y="30.6" font-size="10" fill="#eef5fa" text-anchor="middle" transform="rotate(-11 9.6 27)">150</text><text x="42.2" y="25.8" font-size="10" fill="#eef5fa" text-anchor="middle">100</text><text x="73.4" y="30.6" font-size="10" fill="#eef5fa" text-anchor="middle" transform="rotate(11 73.4 27)">50</text><path d="M41.2 0V32" stroke="#8c3a50" stroke-width="0.7"/><path d="M41.2 39.3 L41.2 33.5" stroke="#fbfbfb" stroke-width="1.8"/><path d="M56.9 41.91 L60.1 36.36" stroke="#c4c4c4" stroke-width="0.8"/><path d="M68.39 53.4 L73.94 50.2" stroke="#c4c4c4" stroke-width="0.8"/><path d="M72.6 69.1 L79 69.1" stroke="#c4c4c4" stroke-width="0.8"/><path d="M68.39 84.8 L73.94 88" stroke="#c4c4c4" stroke-width="0.8"/><path d="M56.9 96.29 L60.1 101.84" stroke="#c4c4c4" stroke-width="0.8"/><path d="M41.2 100.5 L41.2 108.1" stroke="#e8e8e8" stroke-width="1.1"/><path d="M25.5 96.29 L22.3 101.84" stroke="#c4c4c4" stroke-width="0.8"/><path d="M14.01 84.8 L8.46 88" stroke="#c4c4c4" stroke-width="0.8"/><path d="M9.8 69.1 L3.4 69.1" stroke="#c4c4c4" stroke-width="0.8"/><path d="M14.01 53.4 L8.46 50.2" stroke="#c4c4c4" stroke-width="0.8"/><path d="M25.5 41.91 L22.3 36.36" stroke="#c4c4c4" stroke-width="0.8"/><circle cx="41.2" cy="69.1" r="29.1" fill="#000" stroke="#ececec" stroke-width="0.9"/><circle cx="41.2" cy="69.1" r="28" fill="#000"/><circle cx="41.2" cy="54.2" r="5.4" fill="#3c3c3c" stroke="#cfcfcf" stroke-width="1"/><path d="M4 93 L9.4 90 L9.4 96 Z" fill="#b4b4b4"/><path d="M71.2 88.4 l5 3" stroke="#b8b8b8" stroke-width="0.7"/><path d="M71.2 91.4 l5 -3" stroke="#b8b8b8" stroke-width="0.7"/><path d="M71.2 90.2 l5 3" stroke="#b8b8b8" stroke-width="0.7"/><path d="M71.2 93.2 l5 -3" stroke="#b8b8b8" stroke-width="0.7"/><path d="M71.2 92 l5 3" stroke="#b8b8b8" stroke-width="0.7"/><path d="M71.2 95 l5 -3" stroke="#b8b8b8" stroke-width="0.7"/><path d="M71.2 93.8 l5 3" stroke="#b8b8b8" stroke-width="0.7"/><path d="M71.2 96.8 l5 -3" stroke="#b8b8b8" stroke-width="0.7"/></svg>
<div class="b d" style="left:260px;top:198.6px;width:28.4px;height:18.4px;"><span class="bl" style="font-size:8.5px;color:#4a4a4a;margin-left:0px">SSB</span></div>
<div class="b" style="left:291.8px;top:198.6px;width:29.2px;height:18.4px;"><span class="bl" style="font-size:8.5px;color:#a8a8a8;margin-left:0px">PKT</span></div>
<div class="b" style="left:329px;top:198.6px;width:29px;height:18.4px;"><span class="bl" style="font-size:8.5px;color:#4a4a4a;margin-left:0px">WID</span></div>
<div class="b" style="left:260px;top:220.6px;width:28.4px;height:18.4px;"><span class="bl" style="font-size:8.5px;color:#4a4a4a;margin-left:0px">DAT</span></div>
<div class="b" style="left:291.8px;top:220.6px;width:29.2px;height:18.4px;"><span class="bl" style="font-size:8.5px;color:#4a4a4a;margin-left:0px">FSK</span></div>
<div class="b" style="left:329px;top:220.6px;width:29px;height:18.4px;"><span class="bl" style="font-size:8.5px;color:#4a4a4a;margin-left:0px">MED</span></div>
<div class="b" style="left:260px;top:242.2px;width:28.4px;height:18.8px;"><span class="bl" style="font-size:8.5px;color:#4a4a4a;margin-left:0px">CW</span></div>
<div class="b" style="left:291.8px;top:242.2px;width:29.2px;height:18.8px;"><span class="bl" style="font-size:8.5px;color:#a8a8a8;margin-left:0px">WFM</span></div>
<div class="b" style="left:260px;top:265px;width:28.4px;height:19.2px;"><span class="bl" style="font-size:8.5px;color:#4a4a4a;margin-left:0px">AM</span></div>
<div class="b" style="left:291.8px;top:265px;width:29.2px;height:19.2px;"><span class="bl" style="font-size:8.5px;color:#4a4a4a;margin-left:0px">REV</span></div>
<div class="b" style="left:329px;top:265px;width:29px;height:19.2px;"><span class="bl" style="font-size:8.5px;color:#4a4a4a;margin-left:-6px">NB</span><i class="ind"></i></div>
<div class="b" style="left:260px;top:287.5px;width:28.4px;height:18.7px;"><span class="bl" style="font-size:8.5px;color:#4a4a4a;margin-left:0px">FM</span></div>
<div class="b" style="left:291.8px;top:287.5px;width:29.2px;height:18.7px;"><span class="bl" style="font-size:8.5px;color:#4a4a4a;margin-left:0px">AUT</span></div>
<div class="b" style="left:329px;top:287.5px;width:29px;height:18.7px;"><span class="bl" style="font-size:8.5px;color:#4a4a4a;margin-left:-6px">NR</span><i class="ind"></i></div>
<div style="left:324.6px;top:196px;width:0.6px;height:112px;background:#e6e6e6;box-shadow:1px 0 0 #f8f8f8"></div>
<div style="left:363.6px;top:196px;width:0.6px;height:112px;background:#e6e6e6;box-shadow:1px 0 0 #f8f8f8"></div>
<div class="win" style="left:-1px;top:312.2px;width:522px;height:223.8px;"></div>
<div style="left:4.6px;top:318.6px;width:6px;height:5.8px;background:#c2183a;border:0.7px solid #5a0a1a;border-radius:1px"></div>
<div style="left:7.6px;top:320.6px;width:2.6px;height:3px;background:#f4f4f4"></div>
<div class="wt" style="left:238px;top:323.2px">Logbook [TRX-Log.mdb] - New QSO</div>
<div style="left:2.6px;top:328px;width:514.4px;height:206px;background:#f0f0f0"></div>
<div style="left:2.6px;top:351px;width:23.8px;height:183px;background:#f1f1f1"></div>
<div style="left:26px;top:351px;width:0.8px;height:183px;background:#cfcfcf;box-shadow:1px 0 0 #fff"></div>
<div style="left:2.6px;top:350px;width:514.4px;height:0.8px;background:#d8d8d8"></div>
<div style="left:28.6px;top:351.6px;width:26.8px;height:14px;border:0.8px solid #c9c9c9;border-bottom:none;background:#f3f3f3"></div>
<svg style="left:30.4px;top:353.6px;" width="8" height="9" viewBox="0 0 8 9"><rect x="0.8" y="1" width="5" height="5" fill="#f4f4f4" stroke="#3b4a6a" stroke-width="0.7"/><path d="M0.8 2.2H5.8" stroke="#3b4a6a" stroke-width="0.9"/><path d="M3.6 7.6L7 3.8" stroke="#3c3c3c" stroke-width="1.1"/></svg>
<div class="t" style="left:47.6px;top:358.6px;font-size:6.4px;color:#222;transform:translate(-50%,-50%);">Edit</div>
<div style="left:56.4px;top:353px;width:0.8px;height:11.4px;background:#777"></div>
<svg style="left:58.4px;top:354.4px;" width="8" height="8.6" viewBox="0 0 8 8.6"><rect x="0.8" y="2.4" width="6" height="5" fill="#d7dcee" stroke="#23305a" stroke-width="0.8"/><rect x="2" y="0.8" width="2.4" height="2.4" fill="#f0f0f0" stroke="#23305a" stroke-width="0.6"/><rect x="2.4" y="4" width="2.6" height="2" fill="#23305a"/></svg>
<div class="t" style="left:80.2px;top:358.8px;font-size:6.2px;color:#222;transform:translate(-50%,-50%);">Explorer</div>
<div style="left:93.6px;top:353px;width:0.8px;height:11.4px;background:#777"></div>
<div style="left:28.6px;top:365.4px;width:375px;height:123.6px;border:0.8px solid;border-color:#e4e4e4 #a9a9a9 #a9a9a9 #e4e4e4;box-shadow:1px 1px 0 #fafafa"></div>
<div class="grp" style="left:30.8px;top:370px;width:251.8px;height:80.6px;"></div>
<div class="gl" style="left:34.4px;top:370.6px">Station</div>
<div class="lab" style="left:54.5px;top:373.3px;width:62.8px;height:9.2px"><span>CALL</span></div>
<div class="lab" style="left:119.3px;top:373.3px;width:53.6px;height:9.2px"><span>NAME</span></div>
<div class="lab" style="left:175.3px;top:373.3px;width:70.9px;height:9.2px"><span>QTH</span></div>
<div class="lab" style="left:248px;top:373.3px;width:32px;height:9.2px"><span>STATE</span></div>
<div class="b" style="left:33.4px;top:384.6px;width:19.4px;height:10.9px;letter-spacing:-0.3px;font-weight:bold;padding-bottom:1px"><span class="bl" style="font-size:10.4px;color:#1a1a1a;margin-left:0px">&#8250;&#8250;&#8250;</span></div>
<div class="inp" style="left:54.5px;top:384.6px;width:62.8px;height:10.6px"></div>
<div class="inp" style="left:119.3px;top:384.6px;width:53.6px;height:10.6px"></div>
<div class="inp" style="left:175.3px;top:384.6px;width:70.9px;height:10.6px"></div>
<div class="inp" style="left:248px;top:384.6px;width:32px;height:10.6px"></div>
<div class="lab" style="left:54.5px;top:399.2px;width:75.5px;height:9px"><span>COUNTRY</span></div>
<div class="lab" style="left:146.5px;top:399.2px;width:26.4px;height:9px"><span>CONT</span></div>
<div class="lab" style="left:175.3px;top:399.2px;width:21.4px;height:9px"><span>IOTA</span></div>
<div class="lab" style="left:199.2px;top:399.2px;width:23.2px;height:9px"><span>CQZ</span></div>
<div class="lab" style="left:224.4px;top:399.2px;width:20.6px;height:9px"><span>ITU</span></div>
<div class="lab" style="left:248px;top:399.2px;width:32px;height:9px"><span>GRID</span></div>
<div class="b" style="left:33.4px;top:410.4px;width:19.4px;height:10.5px;letter-spacing:-0.3px;font-weight:bold;padding-bottom:1px"><span class="bl" style="font-size:10.4px;color:#1a1a1a;margin-left:0px">&#8250;&#8250;&#8250;</span></div>
<div class="inp" style="left:54.5px;top:410.4px;width:75.5px;height:10.2px"></div>
<div class="b" style="left:133px;top:410.4px;width:10.8px;height:10.2px;font-weight:bold"><span class="bl" style="font-size:7px;color:#111;margin-left:0px">+</span></div>
<div class="inp" style="left:146.5px;top:410.4px;width:26.4px;height:10.2px"></div>
<svg style="left:165.3px;top:413.9px;" width="4.6" height="3.6" viewBox="0 0 4.6 3.6"><path d="M0.4 0.6H4.2L2.3 3Z" fill="#111"/></svg>
<div class="inp" style="left:175.3px;top:410.4px;width:21.4px;height:10.2px">0</div>
<div class="inp" style="left:199.2px;top:410.4px;width:23.2px;height:10.2px"></div>
<div class="inp" style="left:224.4px;top:410.4px;width:20.6px;height:10.2px"></div>
<div class="inp" style="left:248px;top:410.4px;width:32px;height:10.2px"></div>
<div class="lab" style="left:54.5px;top:424.8px;width:142.2px;height:9px"><span>COMMENT</span></div>
<div class="lab" style="left:199.2px;top:424.8px;width:66.5px;height:9px"><span>COUNTY</span></div>
<div class="b" style="left:33.4px;top:436.2px;width:19.4px;height:10.7px;letter-spacing:-0.3px;font-weight:bold;padding-bottom:1px"><span class="bl" style="font-size:10.4px;color:#1a1a1a;margin-left:0px">&#8250;&#8250;&#8250;</span></div>
<div class="inp" style="left:54.5px;top:436.2px;width:142.2px;height:10.4px"></div>
<div class="inp" style="left:199.2px;top:436.2px;width:66.5px;height:10.4px"></div>
<div class="b" style="left:268.2px;top:435.6px;width:12.6px;height:11px;padding-top:2px"><span class="bl" style="font-size:6.6px;color:#333;margin-left:0px">...</span></div>
<div class="grp" style="left:287.4px;top:370px;width:111.4px;height:80.6px;"></div>
<div class="gl" style="left:290.6px;top:370.6px">[1] FT-891</div>
<div class="lab" style="left:317px;top:373.3px;width:40.8px;height:9.2px"><span>MHZ</span></div>
<div class="lab" style="left:359.6px;top:373.3px;width:36.8px;height:9.2px"><span>MODE</span></div>
<div class="b" style="left:292px;top:384.6px;width:16.4px;height:10.9px;letter-spacing:-0.3px;font-weight:bold;padding-bottom:1px"><span class="bl" style="font-size:10.4px;color:#1a1a1a;margin-left:0px">&#8250;&#8250;&#8250;</span></div>
<div style="left:309.4px;top:384px;width:5px;height:11.2px;background:#3ad23a;border:0.7px solid #2a7a2a"></div>
<div class="inp" style="left:317px;top:384.6px;width:40.8px;height:10.6px">0.00000</div>
<div class="inp" style="left:359.6px;top:384.6px;width:36.8px;height:10.6px">SSB</div>
<div class="lab" style="left:291.2px;top:399.2px;width:40.2px;height:9px"><span>BAND</span></div>
<div class="lab" style="left:333.9px;top:399.2px;width:30.1px;height:9px"><span>RST R</span></div>
<div class="lab" style="left:366px;top:399.2px;width:30.4px;height:9px"><span>RST S</span></div>
<div class="inp" style="left:291.2px;top:410.4px;width:40.2px;height:10.2px"></div>
<svg style="left:323.8px;top:413.9px;" width="4.6" height="3.6" viewBox="0 0 4.6 3.6"><path d="M0.4 0.6H4.2L2.3 3Z" fill="#111"/></svg>
<div class="inp" style="left:333.9px;top:410.4px;width:30.1px;height:10.2px"></div>
<div class="inp" style="left:366px;top:410.4px;width:30.4px;height:10.2px"></div>
<div class="lab" style="left:290px;top:424.8px;width:66.6px;height:9px"><span>TRANSCEIVER</span></div>
<div class="lab" style="left:359px;top:424.8px;width:37.4px;height:9px"><span>TX PWR</span></div>
<div class="inp" style="left:290px;top:436.2px;width:66.6px;height:10.4px"></div>
<div class="inp" style="left:359px;top:436.2px;width:37.4px;height:10.4px">100</div>
<div class="grp" style="left:30.8px;top:455px;width:137.6px;height:30.6px;"></div>
<div class="gl" style="left:34.4px;top:455.4px">Date</div>
<div class="lab" style="left:53.8px;top:459.5px;width:58.7px;height:9.4px"><span>M/D/YYYY</span></div>
<div class="lab" style="left:114.3px;top:459.5px;width:25.2px;height:9.4px"><span>ON</span></div>
<div class="lab" style="left:141.3px;top:459.5px;width:25.7px;height:9.4px"><span>OFF</span></div>
<div class="b" style="left:33.3px;top:470.8px;width:18.7px;height:10.9px;letter-spacing:-0.3px;font-weight:bold;padding-bottom:1px"><span class="bl" style="font-size:10.4px;color:#1a1a1a;margin-left:0px">&#8250;&#8250;&#8250;</span></div>
<div class="inp" style="left:53.8px;top:470.8px;width:58.7px;height:10.6px"></div>
<div style="left:102.9px;top:471.8px;width:8.6px;height:8.6px;background:#f0f0f0;border:0.7px solid;border-color:#fff #8e8e8e #8e8e8e #fff"></div>
<svg style="left:104.9px;top:474.5px;" width="4.6" height="3.6" viewBox="0 0 4.6 3.6"><path d="M0.4 0.6H4.2L2.3 3Z" fill="#111"/></svg>
<div class="inp" style="left:114.3px;top:470.8px;width:25.2px;height:10.6px">0</div>
<div class="inp" style="left:141.3px;top:470.8px;width:25.7px;height:10.6px">0</div>
<div class="grp" style="left:172.6px;top:455px;width:224.6px;height:30.6px;"></div>
<div class="gl" style="left:176.4px;top:455.4px">QSL</div>
<div class="lab" style="left:176.3px;top:459.5px;width:21.2px;height:9.4px"><span>RCVD</span></div>
<div class="lab" style="left:200px;top:459.5px;width:22px;height:9.4px"><span>SENT</span></div>
<div class="lab" style="left:224.5px;top:459.5px;width:21.8px;height:9.4px"><span>PRINT</span></div>
<div class="lab" style="left:249.3px;top:459.5px;width:38.7px;height:9.4px"><span>VIA</span></div>
<div class="lab" style="left:291px;top:459.5px;width:59.5px;height:9.4px"><span>OPERATOR</span></div>
<div class="lab" style="left:353px;top:459.5px;width:41.8px;height:9.4px"><span>SENT VIA</span></div>
<div class="inp" style="left:176.3px;top:470.8px;width:21.2px;height:10.6px"></div>
<svg style="left:189.9px;top:474.5px;" width="4.6" height="3.6" viewBox="0 0 4.6 3.6"><path d="M0.4 0.6H4.2L2.3 3Z" fill="#111"/></svg>
<div class="inp" style="left:200px;top:470.8px;width:22px;height:10.6px"></div>
<svg style="left:214.4px;top:474.5px;" width="4.6" height="3.6" viewBox="0 0 4.6 3.6"><path d="M0.4 0.6H4.2L2.3 3Z" fill="#111"/></svg>
<div class="inp" style="left:224.5px;top:470.8px;width:21.8px;height:10.6px"></div>
<svg style="left:238.7px;top:474.5px;" width="4.6" height="3.6" viewBox="0 0 4.6 3.6"><path d="M0.4 0.6H4.2L2.3 3Z" fill="#111"/></svg>
<div class="inp" style="left:249.3px;top:470.8px;width:38.7px;height:10.6px"></div>
<div class="inp" style="left:291px;top:470.8px;width:59.5px;height:10.6px">KM4NMP</div>
<div class="inp" style="left:353px;top:470.8px;width:41.8px;height:10.6px">B</div>
<svg style="left:387.2px;top:474.5px;" width="4.6" height="3.6" viewBox="0 0 4.6 3.6"><path d="M0.4 0.6H4.2L2.3 3Z" fill="#111"/></svg>
<div style="left:27.4px;top:491.6px;width:489.6px;height:42.2px;background:#f2f2f2;border:0.8px solid #a8a8a8;border-right:none"></div>
<div style="left:29.6px;top:492.4px;width:487.4px;height:9.2px;background:#f0f0f0;border-bottom:0.8px solid #b4b4b4"></div>
<div style="left:29.6px;top:501.6px;width:487.4px;height:9.8px;background:#cfe5fb;border-bottom:0.7px solid #b9cfe4"></div>
<div style="left:29.6px;top:501.6px;width:9.9px;height:9.8px;background:#f0f0f0"></div>
<div style="left:39.1px;top:492.4px;width:0.8px;height:19px;background:#9e9e9e"></div>
<div class="t" style="left:41.5px;top:497px;font-size:6.1px;color:#222;transform:translate(0,-50%);">Call</div>
<div class="t" style="left:41.5px;top:506.6px;font-size:6.2px;color:#1f2a3a;transform:translate(0,-50%);">KC0FGX</div>
<div style="left:79.1px;top:492.4px;width:0.8px;height:19px;background:#9e9e9e"></div>
<div class="t" style="left:81.5px;top:497px;font-size:6.1px;color:#222;transform:translate(0,-50%);">Freq</div>
<div class="t" style="left:81.5px;top:506.6px;font-size:6.2px;color:#1f2a3a;transform:translate(0,-50%);">21.076102</div>
<div style="left:115.1px;top:492.4px;width:0.8px;height:19px;background:#9e9e9e"></div>
<div class="t" style="left:117.5px;top:497px;font-size:6.1px;color:#222;transform:translate(0,-50%);">Band</div>
<div class="t" style="left:117.5px;top:506.6px;font-size:6.2px;color:#1f2a3a;transform:translate(0,-50%);">15m</div>
<div style="left:142.1px;top:492.4px;width:0.8px;height:19px;background:#9e9e9e"></div>
<div class="t" style="left:144.5px;top:497px;font-size:6.1px;color:#222;transform:translate(0,-50%);">Mode</div>
<div class="t" style="left:144.5px;top:506.6px;font-size:6.2px;color:#1f2a3a;transform:translate(0,-50%);">FT8</div>
<div style="left:167.6px;top:492.4px;width:0.8px;height:19px;background:#9e9e9e"></div>
<div class="t" style="left:170px;top:497px;font-size:6.1px;color:#222;transform:translate(0,-50%);">RST_Sent</div>
<div class="t" style="left:170px;top:506.6px;font-size:6.2px;color:#1f2a3a;transform:translate(0,-50%);">-09</div>
<div style="left:201.6px;top:492.4px;width:0.8px;height:19px;background:#9e9e9e"></div>
<div class="t" style="left:204px;top:497px;font-size:6.1px;color:#222;transform:translate(0,-50%);">RST_RCVD</div>
<div class="t" style="left:204px;top:506.6px;font-size:6.2px;color:#1f2a3a;transform:translate(0,-50%);">-11</div>
<div style="left:236.6px;top:492.4px;width:0.8px;height:19px;background:#9e9e9e"></div>
<div class="t" style="left:239px;top:497px;font-size:6.1px;color:#222;transform:translate(0,-50%);">QSL_SENT</div>
<div style="left:273.1px;top:492.4px;width:0.8px;height:19px;background:#9e9e9e"></div>
<div class="t" style="left:275.5px;top:497px;font-size:6.1px;color:#222;transform:translate(0,-50%);">QSL_RCVD</div>
<div style="left:309.6px;top:492.4px;width:0.8px;height:19px;background:#9e9e9e"></div>
<div class="t" style="left:312px;top:497px;font-size:6.1px;color:#222;transform:translate(0,-50%);">Date_ON</div>
<div class="t" style="left:312px;top:506.6px;font-size:6.2px;color:#1f2a3a;transform:translate(0,-50%);">7/25/2019 10:08:00</div>
<div style="left:374.4px;top:492.4px;width:0.8px;height:19px;background:#9e9e9e"></div>
<div class="t" style="left:376.8px;top:497px;font-size:6.1px;color:#222;transform:translate(0,-50%);">Name</div>
<div style="left:411.9px;top:492.4px;width:0.8px;height:19px;background:#9e9e9e"></div>
<div class="t" style="left:414.3px;top:497px;font-size:6.1px;color:#222;transform:translate(0,-50%);">QTH</div>
<div style="left:476.4px;top:492.4px;width:0.8px;height:19px;background:#9e9e9e"></div>
<div class="t" style="left:478.8px;top:497px;font-size:6.1px;color:#222;transform:translate(0,-50%);">Country</div>
<div class="t" style="left:478.8px;top:506.6px;font-size:6.2px;color:#1f2a3a;transform:translate(0,-50%);">U.S.A.</div>
<svg style="left:33px;top:503.8px;" width="4" height="5.4" viewBox="0 0 4 5.4"><path d="M0.6 0.4L3.6 2.7L0.6 5Z" fill="#111"/></svg>
<div style="left:79px;top:511.4px;width:1.4px;height:13.6px;background:#9a9a9a"></div>
<div style="left:29.6px;top:525.2px;width:487.4px;height:7.8px;background:#f6f6f6"></div>
<svg style="left:30.6px;top:527px;" width="4" height="5" viewBox="0 0 4 5"><path d="M3.2 0.6L0.8 2.5L3.2 4.4Z" fill="#111"/></svg>
<div style="left:37.2px;top:526.2px;width:0.8px;height:6.8px;background:#8a8a8a"></div>
<div style="left:45.8px;top:526.2px;width:0.8px;height:6.8px;background:#8a8a8a"></div>
<svg style="left:506.6px;top:527px;" width="4" height="5" viewBox="0 0 4 5"><path d="M0.8 0.6L3.2 2.5L0.8 4.4Z" fill="#111"/></svg>
<div style="left:513.2px;top:492.4px;width:4.2px;height:32.8px;background:#fbfbfb;border-left:0.6px solid #b4b4b4"></div>
<svg style="left:513.6px;top:495px;" width="3.6" height="4" viewBox="0 0 3.6 4"><path d="M0.4 3L1.8 0.8L3.2 3Z" fill="#111"/></svg>
<svg style="left:513.6px;top:518.6px;" width="3.6" height="4" viewBox="0 0 3.6 4"><path d="M0.4 0.8L1.8 3L3.2 0.8Z" fill="#111"/></svg>
<div style="left:6.6px;top:357.4px;width:18px;height:18px;background:radial-gradient(circle at 45% 40%,#c8c8c8,#9a9a9a);border-radius:50%;border:0.6px solid #b4b4b4"></div>
<div class="t" style="left:15.6px;top:366.6px;font-size:14px;color:#f2f2f2;transform:translate(-50%,-50%);font-family:'Liberation Serif',serif;font-weight:bold">i</div>
<svg style="left:5.6px;top:378.6px;" width="20" height="20" viewBox="0 0 20 20"><circle cx="10" cy="9.6" r="8.4" fill="#9aa6a0" stroke="#222" stroke-width="1.2"/><path d="M4 6Q10 2 16 6M3 12Q10 16 17 12" stroke="#dfe8e4" stroke-width="1.6" fill="none"/><circle cx="12.6" cy="11.6" r="3.8" fill="#b8e0f4" stroke="#111" stroke-width="1.2"/><path d="M15.4 14.6L19 18.6" stroke="#111" stroke-width="2"/><text x="5" y="14" font-size="6.6" font-weight="bold" fill="#111">4</text></svg>
<svg style="left:5.6px;top:399.6px;" width="20" height="20" viewBox="0 0 20 20"><circle cx="10" cy="10.4" r="7.6" fill="#2a58c8" stroke="#0a1a70" stroke-width="1"/><ellipse cx="10" cy="8.4" rx="11" ry="4" fill="none" stroke="#1a3cc0" stroke-width="1.6" transform="rotate(-28 10 8.4)"/><circle cx="11.4" cy="11.4" r="3.6" fill="#bfe0e8" stroke="#222" stroke-width="1"/><path d="M14 14.4L17.6 18" stroke="#222" stroke-width="1.8"/></svg>
<svg style="left:5.6px;top:418.8px;" width="20" height="20" viewBox="0 0 20 20"><circle cx="10" cy="9.6" r="8.6" fill="#1a2a9a" stroke="#0a0a50" stroke-width="1"/><path d="M3 5Q7 3 10.4 6.2T17.4 8.6M1.8 9.2Q6 7.6 9.6 11T16.4 14.2" stroke="#f4f6ff" stroke-width="2.2" fill="none"/></svg>
<svg style="left:5.6px;top:437.6px;" width="20" height="20" viewBox="0 0 20 20"><rect x="1" y="16.4" width="18" height="1.8" fill="#2a3ab0"/><circle cx="13.6" cy="11.6" r="5.4" fill="#e8a020" stroke="#8a1a1a" stroke-width="1"/><path d="M8.4 13.4H18.8" stroke="#a01818" stroke-width="1.6"/><path d="M5.4 16.4V6.4" stroke="#6a4a1a" stroke-width="1.6"/><path d="M5.4 6.8L1.2 3.4M5.4 6.8L2 8.8M5.4 6.8L9.4 3M5.4 6.8L8.8 8.8M5.4 6.8V2" stroke="#2a9a2a" stroke-width="1.6"/></svg>
<svg style="left:6.6px;top:465.4px;" width="18" height="14" viewBox="0 0 18 14"><rect x="1" y="1.6" width="16" height="10.6" fill="#f4f4f4" stroke="#b4b4b4" stroke-width="1"/><rect x="2.8" y="3.4" width="12.4" height="7" fill="none" stroke="#cfcfcf" stroke-width="0.7"/><rect x="11.6" y="4.4" width="2.4" height="2" fill="#c4c4c4"/><path d="M4.4 8H9" stroke="#c4c4c4" stroke-width="0.8"/></svg>
<svg style="left:7.6px;top:486.6px;" width="17" height="20" viewBox="0 0 17 20"><path d="M2 5V16.4A5 2.4 0 0 0 12 16.4V5" fill="#fafafa" stroke="#111" stroke-width="1.3"/><ellipse cx="7" cy="4.8" rx="5" ry="2.4" fill="#fafafa" stroke="#111" stroke-width="1.3"/><path d="M2 9.4A5 2.4 0 0 0 12 9.4M12 3.4H15V7.4H12" fill="none" stroke="#111" stroke-width="1.1"/></svg>
<svg style="left:5.6px;top:507.6px;" width="20" height="18" viewBox="0 0 20 18"><path d="M5.6 7L7.6 1.4H15.6L13.6 7" fill="#fafafa" stroke="#111" stroke-width="1.1"/><path d="M8.4 3.4H13.6M7.8 5H13" stroke="#333" stroke-width="0.7"/><path d="M1.4 9.4L4.4 6.8H16.4L18.4 9.4V14.4H1.4Z" fill="#dcdcdc" stroke="#111" stroke-width="1.2"/><path d="M1.4 11H18.4" stroke="#111" stroke-width="0.9"/><path d="M3.4 14.4V16.4H16.4V14.4" fill="#c4c4c4" stroke="#111" stroke-width="1"/></svg>
<svg style="left:9.4px;top:330px;" width="19" height="19" viewBox="0 0 19 19"><path d="M1.6 15.6V6.2H6L7.4 7.8H13V10" fill="#f2ee8a" stroke="#1a1a0a" stroke-width="1.1"/><path d="M1.6 15.6L5 9.8H17L13.4 15.6Z" fill="#9c9a2e" stroke="#1a1a0a" stroke-width="1.1"/><path d="M10.4 4.6Q13.6 1.4 16.4 4.6" fill="none" stroke="#111" stroke-width="1.1"/><path d="M17.6 2.6V6H14.2Z" fill="#111"/></svg>
<svg style="left:30.6px;top:330px;" width="19" height="19" viewBox="0 0 19 19"><rect x="2" y="1.6" width="15.4" height="15.8" fill="#838a2e" stroke="#16160a" stroke-width="1.3"/><rect x="5" y="2.4" width="9.4" height="6.4" fill="#d4d4d4" stroke="#333" stroke-width="0.5"/><rect x="5.4" y="11.4" width="8.8" height="6" fill="#16160a"/><rect x="11" y="12.6" width="2.2" height="3.8" fill="#8c8a3a"/></svg>
<svg style="left:50.6px;top:330px;" width="20" height="20" viewBox="0 0 20 20"><path d="M2.6 17.4L10.6 8.4" stroke="#16160a" stroke-width="4"/><path d="M2.6 17.4L10.6 8.4" stroke="#e8e046" stroke-width="2.2"/><circle cx="13.6" cy="5.6" r="4.2" fill="#e8e046" stroke="#16160a" stroke-width="1.1"/><path d="M13 1.4L17 2.4L18 6.4L15.4 9" fill="none" stroke="#16160a" stroke-width="1"/></svg>
<div style="left:72.6px;top:330.6px;width:0.8px;height:18.4px;background:#d4d4d4;box-shadow:1px 0 0 #fff"></div>
<div style="left:74.6px;top:329.6px;width:19px;height:20px;background:#f8f8f8;border:0.7px solid;border-color:#c4c4c4 #fff #fff #c4c4c4"></div>
<svg style="left:77.6px;top:332px;" width="14" height="16" viewBox="0 0 14 16"><path d="M2 1.4H8.6L12 4.8V14.6H2Z" fill="#fff" stroke="#111" stroke-width="1.2"/><path d="M8.6 1.4V4.8H12" fill="none" stroke="#111" stroke-width="0.9"/></svg>
<svg style="left:95px;top:330px;" width="20" height="20" viewBox="0 0 20 20"><rect x="2" y="3.6" width="12.6" height="12" rx="1" fill="#8c8a3a" stroke="#16160a" stroke-width="1.2"/><rect x="5.4" y="1.6" width="6" height="3.6" fill="#b8b690" stroke="#16160a" stroke-width="0.9"/><path d="M9.4 9.4L12 8H17.6V17.6H9.4Z" fill="#c2183a" stroke="#16160a" stroke-width="1.1"/><rect x="13" y="11.4" width="4" height="5.4" fill="#f6f6f6"/></svg>
<div class="t" style="left:121.6px;top:340.4px;font-size:6.7px;color:#222;transform:translate(-50%,-50%);">Spot</div>
<svg style="left:132.6px;top:331px;" width="18" height="18" viewBox="0 0 18 18"><rect x="1" y="1" width="16" height="16" rx="2" fill="#d6e4f4" stroke="#2a4a9a" stroke-width="1.2"/><rect x="2.4" y="2.4" width="13.2" height="6" fill="#2a4ab0"/><path d="M4.4 3V8M7.6 3V8M10.8 3V8M13.4 3V8" stroke="#e8d040" stroke-width="1.1"/><text x="9" y="15.4" font-size="6.4" font-weight="bold" fill="#1a3a9a" text-anchor="middle" font-family="Liberation Sans,sans-serif">DiG</text></svg>
<svg style="left:155.6px;top:330px;" width="20" height="20" viewBox="0 0 20 20"><path d="M2.6 6L10 3.4L17.6 7V15.6L10 18L2.6 15Z" fill="#c2183a" stroke="#16160a" stroke-width="1.1"/><path d="M6 8.4L10 6.8L15 9V14.4L10 15.6L6 14Z" fill="#ececec" stroke="#444" stroke-width="0.6"/><path d="M8 13L16.4 2.6" stroke="#16160a" stroke-width="2.2"/><path d="M8.6 12.4L16.4 2.6" stroke="#d040a0" stroke-width="0.9"/></svg>
<div class="t" style="left:181.4px;top:340.4px;font-size:6.7px;color:#222;transform:translate(-50%,-50%);">Log</div>
<div style="left:190.6px;top:330.6px;width:0.8px;height:18.4px;background:#d4d4d4;box-shadow:1px 0 0 #fff"></div>
<svg style="left:194.6px;top:331.6px;" width="18" height="18" viewBox="0 0 18 18"><path d="M3 3L13.6 14" stroke="#16160a" stroke-width="5.6"/><path d="M3.4 3.4L13 13.4" stroke="#c9a83a" stroke-width="2.2"/><path d="M2.2 2.2L5.8 5.8" stroke="#b84a98" stroke-width="4.4"/><path d="M12 15.4L16.4 17.4L15 12.6Z" fill="#16160a"/></svg>
<svg style="left:216.6px;top:333px;" width="15" height="15" viewBox="0 0 15 15"><path d="M2 2L13 13M13 2L2 13" stroke="#b4b4b4" stroke-width="1.6"/></svg>
<div style="left:235.6px;top:330.6px;width:0.8px;height:18.4px;background:#d4d4d4;box-shadow:1px 0 0 #fff"></div>
<svg style="left:238.6px;top:330.6px;" width="19" height="19" viewBox="0 0 19 19"><rect x="1.6" y="1.6" width="16" height="15" fill="#fdfdfd" stroke="#111" stroke-width="1.2"/><rect x="1.6" y="1.6" width="16" height="3" fill="#2a3ab0"/><path d="M5.6 4.6V16.6" stroke="#111" stroke-width="1"/><path d="M9.6 4.6V16.6" stroke="#111" stroke-width="1"/><path d="M13.6 4.6V16.6" stroke="#111" stroke-width="1"/><path d="M1.6 7.6H17.6" stroke="#111" stroke-width="1"/><path d="M1.6 10.6H17.6" stroke="#111" stroke-width="1"/><path d="M1.6 13.6H17.6" stroke="#111" stroke-width="1"/><ellipse cx="4.6" cy="12" rx="3" ry="1.6" fill="#e8e046" stroke="#111" stroke-width="0.8"/><path d="M1.6 12V16A3 1.6 0 0 0 7.6 16V12" fill="#e8e046" stroke="#111" stroke-width="0.8"/></svg>
<svg style="left:258.6px;top:330.6px;" width="19" height="19" viewBox="0 0 19 19"><rect x="1.6" y="1.6" width="16" height="15" fill="#fdfdfd" stroke="#111" stroke-width="1.2"/><rect x="1.6" y="1.6" width="16" height="3" fill="#111"/><path d="M5.6 4.6V16.6" stroke="#111" stroke-width="1"/><path d="M9.6 4.6V16.6" stroke="#111" stroke-width="1"/><path d="M13.6 4.6V16.6" stroke="#111" stroke-width="1"/><path d="M1.6 7.6H17.6" stroke="#111" stroke-width="1"/><path d="M1.6 10.6H17.6" stroke="#111" stroke-width="1"/><path d="M1.6 13.6H17.6" stroke="#111" stroke-width="1"/><rect x="9" y="10.4" width="8" height="7.6" fill="#8c8a3a" stroke="#111" stroke-width="0.9"/><rect x="11" y="14.4" width="4" height="3.4" fill="#111"/><ellipse cx="4.6" cy="12" rx="3" ry="1.6" fill="#e8e046" stroke="#111" stroke-width="0.8"/><path d="M1.6 12V16A3 1.6 0 0 0 7.6 16V12" fill="#e8e046" stroke="#111" stroke-width="0.8"/></svg>
<svg style="left:280.4px;top:330.6px;" width="18" height="19" viewBox="0 0 18 19"><text x="4.6" y="9" font-size="9.4" font-weight="bold" fill="#2a3ab0" text-anchor="middle" font-family="Liberation Serif,serif">A</text><text x="4.6" y="17.6" font-size="9.4" font-weight="bold" fill="#b01a2a" text-anchor="middle" font-family="Liberation Serif,serif">Z</text><path d="M13 2V14" stroke="#111" stroke-width="1.1"/><path d="M10.4 12.6H15.6L13 17.4Z" fill="#111"/></svg>
<svg style="left:300.6px;top:330.6px;" width="18" height="19" viewBox="0 0 18 19"><text x="4.6" y="9" font-size="9.4" font-weight="bold" fill="#b01a2a" text-anchor="middle" font-family="Liberation Serif,serif">Z</text><text x="4.6" y="17.6" font-size="9.4" font-weight="bold" fill="#2a3ab0" text-anchor="middle" font-family="Liberation Serif,serif">A</text><path d="M13 2V14" stroke="#111" stroke-width="1.1"/><path d="M10.4 12.6H15.6L13 17.4Z" fill="#111"/></svg>
<svg style="left:319.8px;top:331.4px;" width="18.8" height="17.6" viewBox="0 0 17 16"><path d="M2 14.6L3.6 5.4L6 3H7.4L8 6H9L9.6 3H11L13.4 5.4L15 14.6H9.6V9H7.4V14.6Z" fill="#111"/><rect x="2.8" y="12.6" width="3.4" height="1.6" fill="#888"/><rect x="10.8" y="12.6" width="3.4" height="1.6" fill="#888"/></svg>
<div class="t" style="left:348.2px;top:340.4px;font-size:6.7px;color:#222;transform:translate(-50%,-50%);">Select</div>
<svg style="left:360.4px;top:337px;" width="9" height="7" viewBox="0 0 9 7"><path d="M0.6 1H8.4L4.5 6Z" fill="#111"/></svg>
<div style="left:803.8px;top:321.6px;width:205.4px;height:205.4px;background:#fff"></div>
<svg style="left:804.4px;top:320.8px;" width="205.2" height="205.2" viewBox="0 0 205.2 205.2"><path d="M84.23 58.29A15.4 15.4 0 1 1 108.17 58.29A14.18 14.18 0 1 0 84.23 58.29Z" fill="#58ab48"/><path d="M75.84 65.09A26.2 26.2 0 1 1 116.56 65.09A24.88 24.88 0 1 0 75.84 65.09Z" fill="#58ab48"/><path d="M68.53 71A35.6 35.6 0 1 1 123.87 71A34.2 34.2 0 1 0 68.53 71Z" fill="#58ab48"/><circle cx="96.2" cy="48.6" r="7.7" fill="#1f1f1f"/><path d="M96.2 63.6L107.4 104H85Z" fill="#222"/><rect x="92.6" y="83.8" width="7.2" height="1.5" fill="#fff"/><rect x="90.8" y="90.2" width="10.8" height="1.9" fill="#fff"/><rect x="88.6" y="97.8" width="15.2" height="2.6" fill="#fff"/><rect x="79.3" y="104.6" width="33.8" height="4.8" rx="2.2" fill="#222"/><rect x="83.7" y="103.8" width="25" height="0.9" fill="#fff"/><text transform="translate(26.7 149.6) scale(1 1)" x="0 19 46.7 70 91.6 116.1" y="0" font-size="41.2" font-weight="200" fill="#111" stroke="#111" stroke-width="1.1" stroke-linejoin="round" font-family="DejaVu Sans,Liberation Sans,sans-serif">KM4NMP</text><text x="31.2" y="162" font-size="8.2" fill="#111" textLength="136" lengthAdjust="spacingAndGlyphs" font-family="Liberation Sans,sans-serif">KM 4 Needs More Power</text></svg>
<div style="left:1014px;top:49.4px;width:10px;height:494.6px;background:#f0f0f0"></div>
<div style="left:1014px;top:58.6px;width:10px;height:446.8px;background:#cdcdcd"></div>
<svg style="left:1015.5px;top:51.5px;" width="7" height="5" viewBox="0 0 7 5"><path d="M1 4L3.5 1.3L6 4" stroke="#505050" stroke-width="1.1" fill="none"/></svg>
<svg style="left:1015.5px;top:528.3px;" width="7" height="5" viewBox="0 0 7 5"><path d="M1 1L3.5 3.7L6 1" stroke="#505050" stroke-width="1.1" fill="none"/></svg>
<div style="left:0px;top:534.8px;width:1014px;height:9.2px;background:#f0f0f0"></div>
<div style="left:8.6px;top:535.8px;width:983.2px;height:7.6px;background:#cdcdcd"></div>
<svg style="left:0.5px;top:536.7px;" width="5" height="6" viewBox="0 0 5 6"><path d="M4 0.8L1.3 3L4 5.2" stroke="#505050" stroke-width="1" fill="none"/></svg>
<svg style="left:1007px;top:536.7px;" width="5" height="6" viewBox="0 0 5 6"><path d="M1 0.8L3.7 3L1 5.2" stroke="#505050" stroke-width="1" fill="none"/></svg>
<div style="left:0px;top:543.6px;width:1024px;height:11.6px;background:#f1f1f1;border-top:0.6px solid #dcdcdc"></div>
<div style="left:1px;top:547px;width:5px;height:7.6px;background:#6b5a3a;border-radius:2px 2px 0 0"></div>
<div style="left:0px;top:553.2px;width:7px;height:1.6px;background:#b8c83a"></div>
<div class="t" style="left:8.6px;top:552px;font-size:6.8px;color:#222;transform:translate(0,-50%);">KM4NMP</div>
<div style="left:41.4px;top:546px;width:0.8px;height:9px;background:#c4c4c4"></div>
<div style="left:44.5px;top:547.6px;width:7px;height:6.8px;background:#1c3f9a;border:0.8px solid #0a1c55"></div>
<div style="left:46px;top:549.8px;width:4px;height:2.6px;background:#e8eefc"></div>
<div class="t" style="left:55px;top:552px;font-size:6.9px;color:#222;transform:translate(0,-50%);">UDP Log Gateway open [UDP Port: 12060]</div>
<div style="left:188px;top:546px;width:0.8px;height:9px;background:#c4c4c4"></div>
<div style="left:921px;top:547.4px;width:8px;height:7.2px;background:radial-gradient(circle at 40% 40%,#7fd08a,#0a2a9c 70%);border-radius:50%"></div>
<div style="left:955.4px;top:545.5px;width:0.8px;height:9px;background:#c4c4c4"></div>
<div style="left:1013.2px;top:545.5px;width:0.8px;height:9px;background:#c4c4c4"></div>
<div style="left:958px;top:547.4px;width:8px;height:7.6px;background:#f3e94a;border:0.9px solid #5a5210;border-radius:50%"></div>
<div class="t" style="left:969.5px;top:552px;font-size:6.8px;color:#222;transform:translate(0,-50%);">UTC : 15:09</div>
<div style="left:0px;top:555.2px;width:1024px;height:1.8px;background:#2b3036"></div>
<div style="left:0px;top:555.8px;width:125px;height:1.2px;background:#3b4148"></div>
<div style="left:128px;top:555.8px;width:134px;height:1.2px;background:#444c55"></div>
<div style="left:266px;top:555.8px;width:254px;height:1.2px;background:#2f353c"></div>
<div style="left:545px;top:555.8px;width:75px;height:1.2px;background:#3c4450"></div>
<div style="left:625px;top:555.8px;width:135px;height:1.2px;background:#2a2f35"></div>
<div style="left:371px;top:189px;width:320.2px;height:230.2px;background:linear-gradient(#e6eef8 0,#c9d9ee 5px,#bccfe9 11px,#d0dff1 16px,#cbdcf0 100%);border:1px solid;border-color:#eef3f9 #73869a #73869a #eef3f9;box-shadow:0 0 2px rgba(40,60,90,0.35)"></div>
<svg style="left:376.6px;top:194px;" width="8.4" height="9.4" viewBox="0 0 8.4 9.4"><path d="M1 1.6L4 0.8L7.4 1.6V6L4 8.6L1 6Z" fill="#c83a2a" stroke="#5a2a1a" stroke-width="0.6"/><rect x="2.4" y="4.6" width="3.6" height="3" fill="#e8d83a"/></svg>
<div class="wt" style="left:508.4px;top:199.8px;color:#1e1e1e">Sound recorder [TRX.wav]</div>
<div style="left:632.6px;top:194.6px;width:17px;height:9.2px;border:0.8px solid #9db0c8;background:linear-gradient(#d3e0f0,#b4c8e2);border-radius:1.4px"></div>
<div style="left:650.6px;top:194.6px;width:17px;height:9.2px;border:0.8px solid #9db0c8;background:linear-gradient(#d3e0f0,#b4c8e2);border-radius:1.4px"></div>
<div style="left:637.4px;top:199.8px;width:7.2px;height:2.4px;border:0.8px solid #6a7a90;background:#eef3f9"></div>
<div style="left:655.8px;top:196.8px;width:6.8px;height:4.8px;border:0.8px solid #6a7a90;background:#eef3f9"></div>
<div style="left:668.6px;top:194.6px;width:17px;height:9.2px;background:linear-gradient(#e3a396,#cc5f4e 45%,#c24838);border:0.8px solid #94483c;border-radius:1.4px"></div>
<svg style="left:673.4px;top:196.2px;" width="7.4" height="6.2" viewBox="0 0 7.4 6.2"><path d="M1.4 0.8L6 5.4M6 0.8L1.4 5.4" stroke="#fff" stroke-width="1.3"/></svg>
<div style="left:376px;top:205.4px;width:308.4px;height:208px;background:#f0f0f0"></div>
<svg style="left:381.8px;top:207.6px;" width="18.24" height="18.24" viewBox="0 0 19 19"><path d="M1.6 15.6V6.2H6L7.4 7.8H13V10" fill="#f2ee8a" stroke="#1a1a0a" stroke-width="1.1"/><path d="M1.6 15.6L5 9.8H17L13.4 15.6Z" fill="#9c9a2e" stroke="#1a1a0a" stroke-width="1.1"/><path d="M10.4 4.6Q13.6 1.4 16.4 4.6" fill="none" stroke="#111" stroke-width="1.1"/><path d="M17.6 2.6V6H14.2Z" fill="#111"/></svg>
<svg style="left:403.2px;top:208.8px;" width="16.72" height="16.72" viewBox="0 0 19 19"><rect x="2" y="1.6" width="15.4" height="15.8" fill="#838a2e" stroke="#16160a" stroke-width="1.3"/><rect x="5" y="2.4" width="9.4" height="6.4" fill="#d4d4d4" stroke="#333" stroke-width="0.5"/><rect x="5.4" y="11.4" width="8.8" height="6" fill="#16160a"/><rect x="11" y="12.6" width="2.2" height="3.8" fill="#8c8a3a"/></svg>
<svg style="left:426.6px;top:208px;" width="19" height="19" viewBox="0 0 19 19"><rect x="4" y="4.6" width="12" height="13" fill="#f4f4f4" stroke="#b0b0b0" stroke-width="1.1"/><rect x="7" y="2.6" width="6" height="3.4" fill="#e0e0e0" stroke="#b0b0b0" stroke-width="0.8"/><path d="M6.4 9H13.6M6.4 11.6H13.6M6.4 14.2H13.6" stroke="#b8b8b8" stroke-width="0.9"/><path d="M1 1.6L5 5M1 5L5 1.6M3 0.6V6" stroke="#b0b0b0" stroke-width="0.8"/></svg>
<svg style="left:447.6px;top:209.6px;" width="16" height="16" viewBox="0 0 16 16"><path d="M2 2L14 14M14 2L2 14" stroke="#b4b4b4" stroke-width="1.7"/></svg>
<svg style="left:466.6px;top:208.6px;" width="18" height="18" viewBox="0 0 18 18"><path d="M3.4 3.4L14.4 14.6" stroke="#b0b0b0" stroke-width="4.4" stroke-linecap="round"/></svg>
<div style="left:487.4px;top:208.6px;width:0.8px;height:18px;background:#d0d0d0;box-shadow:1px 0 0 #fff"></div>
<svg style="left:491px;top:208px;" width="18" height="18" viewBox="0 0 18 18"><circle cx="9" cy="9.4" r="7.6" fill="#f2ee5a" stroke="#1a1a0a" stroke-width="1.2"/><path d="M9 9.4L12.6 5.4M9 9.4H14" stroke="#1a1a0a" stroke-width="1"/></svg>
<svg style="left:510.4px;top:208.4px;" width="18" height="18" viewBox="0 0 18 18"><rect x="1" y="1.4" width="16" height="13" rx="1.4" fill="#1a1a3a" stroke="#111" stroke-width="0.8"/><path d="M2.6 12.6V8L5 5L7.4 8.4L9.6 4L12 7.6L14 6L15.4 8.4V12.6Z" fill="#3ac84a"/><path d="M2.6 5L5 3L7.4 5.6L9.6 2.6L12 5L15.4 3.6" fill="none" stroke="#e83a6a" stroke-width="1.6"/><rect x="2.6" y="12.6" width="12.8" height="1.4" fill="#e8e03a"/><rect x="2" y="14.6" width="3.6" height="2.4" fill="#111"/><rect x="12.4" y="14.6" width="3.6" height="2.4" fill="#111"/></svg>
<div style="left:534.6px;top:208.6px;width:0.8px;height:18px;background:#d0d0d0;box-shadow:1px 0 0 #fff"></div>
<svg style="left:541.4px;top:210.4px;" width="16" height="14" viewBox="0 0 16 14"><path d="M2 1V13" stroke="#111" stroke-width="1.4"/><path d="M14.6 1V13L3.6 7Z" fill="#111"/></svg>
<svg style="left:559.4px;top:210.4px;" width="16" height="14" viewBox="0 0 16 14"><path d="M14 1V13" stroke="#111" stroke-width="1.4"/><path d="M1.4 1V13L12.4 7Z" fill="#111"/></svg>
<svg style="left:580px;top:210.4px;" width="16" height="14" viewBox="0 0 16 14"><path d="M2 1V13L14 7Z" fill="#111"/></svg>
<svg style="left:605.4px;top:210.4px;" width="11" height="14" viewBox="0 0 11 14"><path d="M3 1V13M8 1V13" stroke="#b4b4b4" stroke-width="1.5"/></svg>
<div style="left:624.8px;top:212.8px;width:12px;height:9.8px;background:#a6a6a6"></div>
<div style="left:644.6px;top:212.2px;width:11px;height:11px;background:#ee1111;border-radius:42%"></div>
<div style="left:660.6px;top:208.6px;width:0.8px;height:18px;background:#d0d0d0;box-shadow:1px 0 0 #fff"></div>
<svg style="left:665.4px;top:207.6px;" width="19" height="19" viewBox="0 0 19 19"><path d="M9.6 9L5.4 2.4M9.6 9L14.4 1.6M9.6 9V3.4" stroke="#111" stroke-width="1.2"/><path d="M1 4H5.4M3.6 2.4L5.6 4L3.6 5.6" fill="none" stroke="#1a3ae0" stroke-width="1"/><rect x="2.4" y="9" width="15" height="7.6" rx="1.6" fill="#141414"/><rect x="4" y="10.6" width="7" height="3" fill="#c82a2a"/><path d="M6.4 11L8 13.6L9.4 11" fill="#f4f4f4"/><circle cx="14" cy="12.2" r="1.5" fill="#3ab83a"/><rect x="3.4" y="16.6" width="3" height="1.6" fill="#141414"/><rect x="13.4" y="16.6" width="3" height="1.6" fill="#141414"/></svg>
<div style="left:376.4px;top:227.8px;width:310px;height:0.8px;background:#dadada"></div>
<div style="left:376.6px;top:231.4px;width:93px;height:11.8px;background:#7ff4f6;border:0.7px solid;border-color:#8a9a9a #e0f8f8 #e0f8f8 #8a9a9a"></div>
<div class="t" style="left:378.4px;top:237.4px;font-size:7.4px;color:#1a2a2a;transform:translate(0,-50%);font-weight:bold">Stop 00:00:00.0</div>
<div style="left:484.4px;top:236.6px;width:186.2px;height:1px;background:#a6a6a6;box-shadow:0 1px 0 #fff"></div>
<svg style="left:481px;top:231.6px;" width="6" height="12" viewBox="0 0 6 12"><path d="M1 0.6H5V9L3 11.4L1 9Z" fill="#f0f0f0" stroke="#8a8a8a" stroke-width="0.8"/></svg>
<div style="left:377.2px;top:250.2px;width:26.2px;height:8.8px;border:0.8px solid #8a8a8a;background:#f4f4f4"></div>
<div style="left:380.4px;top:251.4px;width:6px;height:6.4px;background:#fdfdfd;border:0.7px solid #444"></div>
<div style="left:383.4px;top:252.4px;width:4px;height:5.4px;background:#c8c8c0;border:0.5px solid #666"></div>
<div class="t" style="left:394.4px;top:254.8px;font-size:5.6px;color:#111;transform:translate(-50%,-50%);">Log</div>
<div style="left:408.6px;top:251.4px;width:6.8px;height:6.8px;background:#f2ee5a;border:0.9px solid #6a5c10;border-radius:50%"></div>
<div class="t" style="left:421.6px;top:254.8px;font-size:5.6px;color:#111;transform:translate(-50%,-50%);">List</div>
<div style="left:428px;top:250.6px;width:0.8px;height:8px;background:#666"></div>
<div style="left:380.4px;top:260.8px;width:301.8px;height:148.2px;background:#fafafa;border:0.8px solid #c8c8c8"></div>
<div style="left:381.6px;top:262px;width:299.4px;height:145.8px;background:#0580c1"></div>
</body></html>
